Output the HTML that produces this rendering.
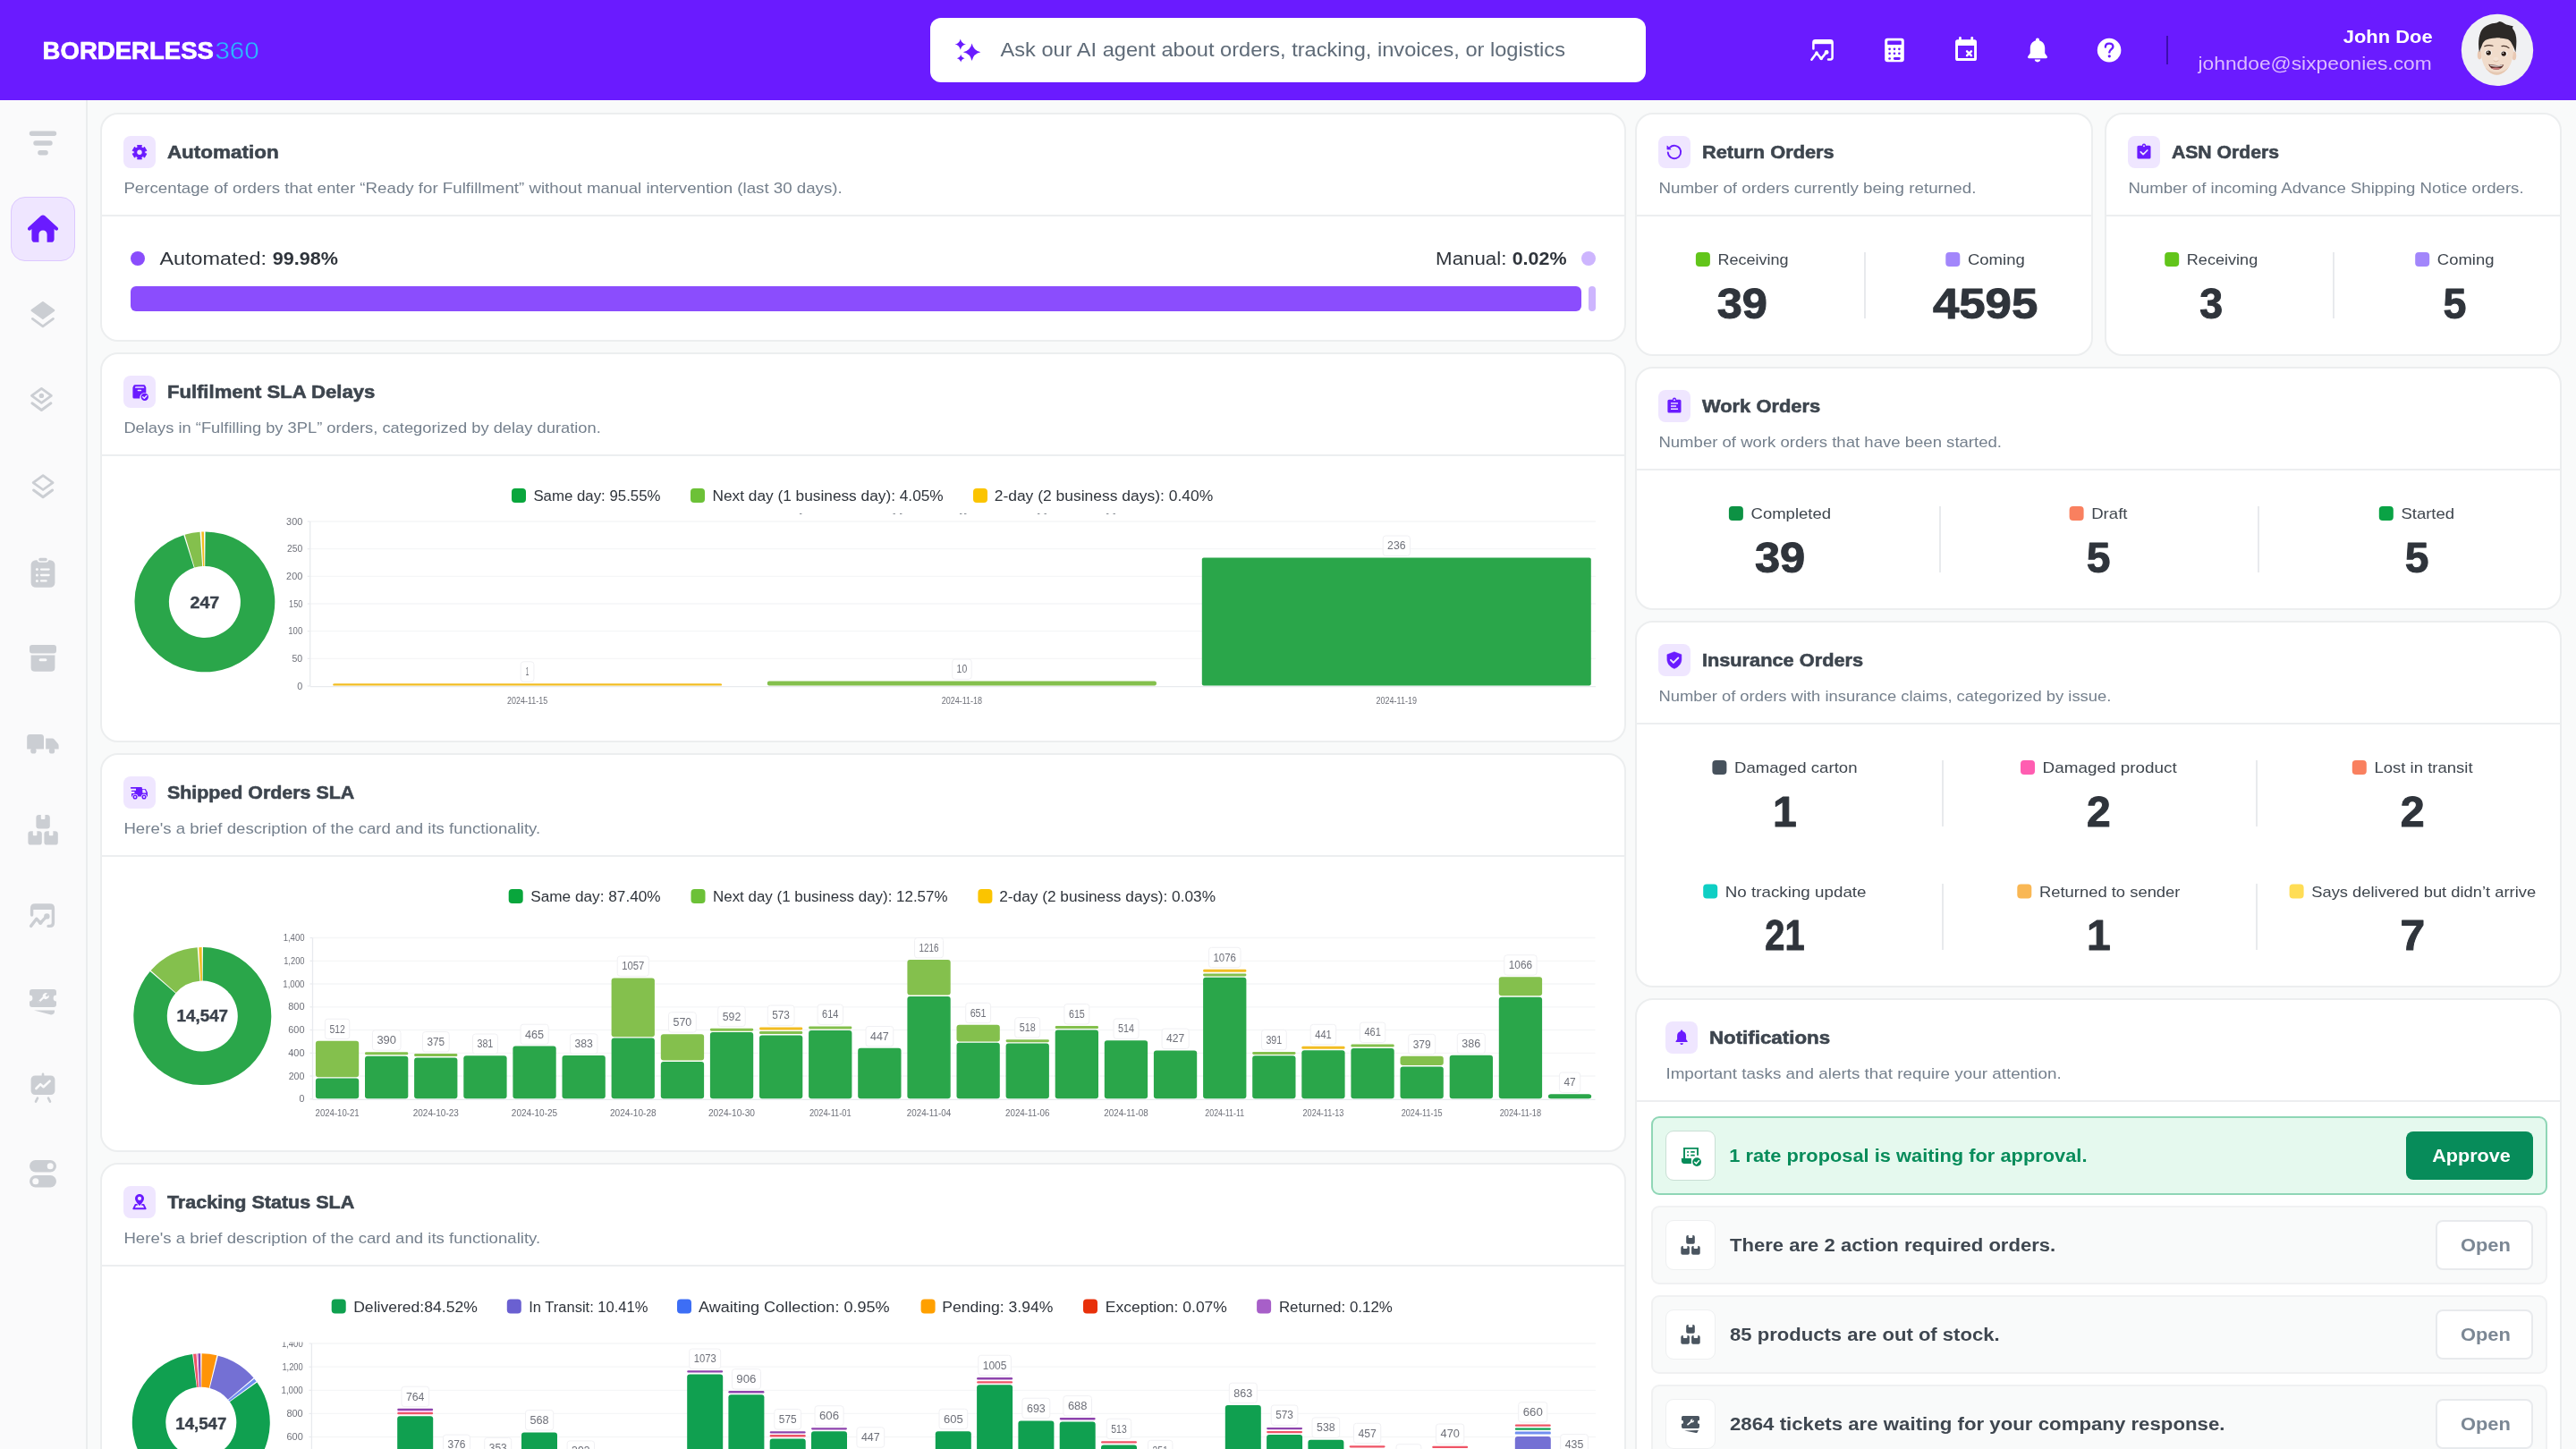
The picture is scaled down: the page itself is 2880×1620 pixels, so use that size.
<!DOCTYPE html>
<html lang="en"><head><meta charset="utf-8"><title>Borderless360 Dashboard</title>
<style>
:root{--u:calc(100vw / 2880);}
html,body{margin:0;padding:0;}
body{width:100vw;height:calc(1620*var(--u));overflow:hidden;background:#f9fafa;position:relative;font-family:"Liberation Sans",sans-serif;}
.b{position:absolute;box-sizing:content-box;}
.card{background:#fff;border:calc(2*var(--u)) solid #eceeef;border-radius:calc(20*var(--u));box-sizing:border-box;}
svg.ov{position:absolute;left:0;top:0;width:100vw;height:calc(1620*var(--u));will-change:transform;}
svg text{font-family:"Liberation Sans",sans-serif;}
</style></head>
<body>
<div class="b" style="left:calc(0*var(--u));top:calc(0*var(--u));width:calc(2880*var(--u));height:calc(112*var(--u));background:#6a1bff;"></div>
<div class="b" style="left:calc(1040*var(--u));top:calc(20*var(--u));width:calc(800*var(--u));height:calc(72*var(--u));background:#fff;border-radius:calc(12*var(--u));"></div>
<div class="b" style="left:calc(2422*var(--u));top:calc(40*var(--u));width:calc(2*var(--u));height:calc(32*var(--u));background:#3d0eae;"></div>
<div class="b" style="left:calc(0*var(--u));top:calc(112*var(--u));width:calc(96*var(--u));height:calc(1508*var(--u));background:#fafafb;border-right:calc(2*var(--u)) solid #ebedee;"></div>
<div class="b" style="left:calc(12*var(--u));top:calc(220*var(--u));width:calc(72*var(--u));height:calc(72*var(--u));background:#efe6ff;border:calc(1*var(--u)) solid #dcc8ff;border-radius:calc(16*var(--u));box-sizing:border-box;"></div>
<div class="b card" style="left:calc(112*var(--u));top:calc(126*var(--u));width:calc(1706*var(--u));height:calc(256*var(--u));"></div>
<div class="b" style="left:calc(114*var(--u));top:calc(240*var(--u));width:calc(1702*var(--u));height:calc(2*var(--u));background:#eceef0;"></div>
<div class="b" style="left:calc(138*var(--u));top:calc(152*var(--u));width:calc(36*var(--u));height:calc(36*var(--u));background:#efe6ff;border-radius:calc(8*var(--u));"></div>
<div class="b card" style="left:calc(112*var(--u));top:calc(394*var(--u));width:calc(1706*var(--u));height:calc(436*var(--u));"></div>
<div class="b" style="left:calc(114*var(--u));top:calc(508*var(--u));width:calc(1702*var(--u));height:calc(2*var(--u));background:#eceef0;"></div>
<div class="b" style="left:calc(138*var(--u));top:calc(420*var(--u));width:calc(36*var(--u));height:calc(36*var(--u));background:#efe6ff;border-radius:calc(8*var(--u));"></div>
<div class="b card" style="left:calc(112*var(--u));top:calc(842*var(--u));width:calc(1706*var(--u));height:calc(446*var(--u));"></div>
<div class="b" style="left:calc(114*var(--u));top:calc(956*var(--u));width:calc(1702*var(--u));height:calc(2*var(--u));background:#eceef0;"></div>
<div class="b" style="left:calc(138*var(--u));top:calc(868*var(--u));width:calc(36*var(--u));height:calc(36*var(--u));background:#efe6ff;border-radius:calc(8*var(--u));"></div>
<div class="b card" style="left:calc(112*var(--u));top:calc(1300*var(--u));width:calc(1706*var(--u));height:calc(400*var(--u));"></div>
<div class="b" style="left:calc(114*var(--u));top:calc(1414*var(--u));width:calc(1702*var(--u));height:calc(2*var(--u));background:#eceef0;"></div>
<div class="b" style="left:calc(138*var(--u));top:calc(1326*var(--u));width:calc(36*var(--u));height:calc(36*var(--u));background:#efe6ff;border-radius:calc(8*var(--u));"></div>
<div class="b card" style="left:calc(1828*var(--u));top:calc(126*var(--u));width:calc(512*var(--u));height:calc(272*var(--u));"></div>
<div class="b" style="left:calc(1830*var(--u));top:calc(240*var(--u));width:calc(508*var(--u));height:calc(2*var(--u));background:#eceef0;"></div>
<div class="b" style="left:calc(1854*var(--u));top:calc(152*var(--u));width:calc(36*var(--u));height:calc(36*var(--u));background:#efe6ff;border-radius:calc(8*var(--u));"></div>
<div class="b card" style="left:calc(2353*var(--u));top:calc(126*var(--u));width:calc(511*var(--u));height:calc(272*var(--u));"></div>
<div class="b" style="left:calc(2355*var(--u));top:calc(240*var(--u));width:calc(507*var(--u));height:calc(2*var(--u));background:#eceef0;"></div>
<div class="b" style="left:calc(2379*var(--u));top:calc(152*var(--u));width:calc(36*var(--u));height:calc(36*var(--u));background:#efe6ff;border-radius:calc(8*var(--u));"></div>
<div class="b card" style="left:calc(1828*var(--u));top:calc(410*var(--u));width:calc(1036*var(--u));height:calc(272*var(--u));"></div>
<div class="b" style="left:calc(1830*var(--u));top:calc(524*var(--u));width:calc(1032*var(--u));height:calc(2*var(--u));background:#eceef0;"></div>
<div class="b" style="left:calc(1854*var(--u));top:calc(436*var(--u));width:calc(36*var(--u));height:calc(36*var(--u));background:#efe6ff;border-radius:calc(8*var(--u));"></div>
<div class="b card" style="left:calc(1828*var(--u));top:calc(694*var(--u));width:calc(1036*var(--u));height:calc(410*var(--u));"></div>
<div class="b" style="left:calc(1830*var(--u));top:calc(808*var(--u));width:calc(1032*var(--u));height:calc(2*var(--u));background:#eceef0;"></div>
<div class="b" style="left:calc(1854*var(--u));top:calc(720*var(--u));width:calc(36*var(--u));height:calc(36*var(--u));background:#efe6ff;border-radius:calc(8*var(--u));"></div>
<div class="b card" style="left:calc(1828*var(--u));top:calc(1116*var(--u));width:calc(1036*var(--u));height:calc(600*var(--u));"></div>
<div class="b" style="left:calc(1830*var(--u));top:calc(1230*var(--u));width:calc(1032*var(--u));height:calc(2*var(--u));background:#eceef0;"></div>
<div class="b" style="left:calc(1862*var(--u));top:calc(1142*var(--u));width:calc(36*var(--u));height:calc(36*var(--u));background:#efe6ff;border-radius:calc(8*var(--u));"></div>
<div class="b" style="left:calc(2083.6*var(--u));top:calc(282*var(--u));width:calc(2*var(--u));height:calc(74*var(--u));background:#e8eaed;"></div>
<div class="b" style="left:calc(2607.6*var(--u));top:calc(282*var(--u));width:calc(2*var(--u));height:calc(74*var(--u));background:#e8eaed;"></div>
<div class="b" style="left:calc(2167.7*var(--u));top:calc(566*var(--u));width:calc(2*var(--u));height:calc(74*var(--u));background:#e8eaed;"></div>
<div class="b" style="left:calc(2523.7*var(--u));top:calc(566*var(--u));width:calc(2*var(--u));height:calc(74*var(--u));background:#e8eaed;"></div>
<div class="b" style="left:calc(2170.5*var(--u));top:calc(850*var(--u));width:calc(2*var(--u));height:calc(74*var(--u));background:#e8eaed;"></div>
<div class="b" style="left:calc(2521.5*var(--u));top:calc(850*var(--u));width:calc(2*var(--u));height:calc(74*var(--u));background:#e8eaed;"></div>
<div class="b" style="left:calc(2170.5*var(--u));top:calc(988.4*var(--u));width:calc(2*var(--u));height:calc(74*var(--u));background:#e8eaed;"></div>
<div class="b" style="left:calc(2521.5*var(--u));top:calc(988.4*var(--u));width:calc(2*var(--u));height:calc(74*var(--u));background:#e8eaed;"></div>
<div class="b" style="left:calc(1846*var(--u));top:calc(1248*var(--u));width:calc(1002*var(--u));height:calc(88*var(--u));background:#e5f9ee;border:calc(2*var(--u)) solid #8fd6b6;border-radius:calc(9*var(--u));box-sizing:border-box;"></div>
<div class="b" style="left:calc(1862.2*var(--u));top:calc(1264.2*var(--u));width:calc(55.6*var(--u));height:calc(55.6*var(--u));background:#fff;border:calc(1.5*var(--u)) solid #c9dfd4;border-radius:calc(9*var(--u));box-sizing:border-box;"></div>
<div class="b" style="left:calc(2690*var(--u));top:calc(1265*var(--u));width:calc(142*var(--u));height:calc(54*var(--u));background:#078c5a;border-radius:calc(8*var(--u));"></div>
<div class="b" style="left:calc(1846*var(--u));top:calc(1348*var(--u));width:calc(1002*var(--u));height:calc(88*var(--u));background:#f9fafa;border:calc(2*var(--u)) solid #f0f1f2;border-radius:calc(9*var(--u));box-sizing:border-box;"></div>
<div class="b" style="left:calc(1862.2*var(--u));top:calc(1364.2*var(--u));width:calc(55.6*var(--u));height:calc(55.6*var(--u));background:#fff;border:calc(1.5*var(--u)) solid #eef0f1;border-radius:calc(9*var(--u));box-sizing:border-box;"></div>
<div class="b" style="left:calc(2722.6*var(--u));top:calc(1364*var(--u));width:calc(109.6*var(--u));height:calc(56*var(--u));background:#fff;border:calc(2*var(--u)) solid #e8eaed;border-radius:calc(8*var(--u));box-sizing:border-box;"></div>
<div class="b" style="left:calc(1846*var(--u));top:calc(1448*var(--u));width:calc(1002*var(--u));height:calc(88*var(--u));background:#f9fafa;border:calc(2*var(--u)) solid #f0f1f2;border-radius:calc(9*var(--u));box-sizing:border-box;"></div>
<div class="b" style="left:calc(1862.2*var(--u));top:calc(1464.2*var(--u));width:calc(55.6*var(--u));height:calc(55.6*var(--u));background:#fff;border:calc(1.5*var(--u)) solid #eef0f1;border-radius:calc(9*var(--u));box-sizing:border-box;"></div>
<div class="b" style="left:calc(2722.6*var(--u));top:calc(1464*var(--u));width:calc(109.6*var(--u));height:calc(56*var(--u));background:#fff;border:calc(2*var(--u)) solid #e8eaed;border-radius:calc(8*var(--u));box-sizing:border-box;"></div>
<div class="b" style="left:calc(1846*var(--u));top:calc(1548*var(--u));width:calc(1002*var(--u));height:calc(88*var(--u));background:#f9fafa;border:calc(2*var(--u)) solid #f0f1f2;border-radius:calc(9*var(--u));box-sizing:border-box;"></div>
<div class="b" style="left:calc(1862.2*var(--u));top:calc(1564.2*var(--u));width:calc(55.6*var(--u));height:calc(55.6*var(--u));background:#fff;border:calc(1.5*var(--u)) solid #eef0f1;border-radius:calc(9*var(--u));box-sizing:border-box;"></div>
<div class="b" style="left:calc(2722.6*var(--u));top:calc(1564*var(--u));width:calc(109.6*var(--u));height:calc(56*var(--u));background:#fff;border:calc(2*var(--u)) solid #e8eaed;border-radius:calc(8*var(--u));box-sizing:border-box;"></div>
<svg class="ov" viewBox="0 0 2880 1620" preserveAspectRatio="xMinYMin meet">
<text x="47.6" y="65.6" font-size="27.2" fill="#ffffff" font-weight="700" textLength="191.3" lengthAdjust="spacingAndGlyphs" stroke="#fff" stroke-width="0.7" stroke-linejoin="round">BORDERLESS</text>
<text x="240.4" y="65.8" font-size="28" fill="#2bb8ff" textLength="49.3" lengthAdjust="spacingAndGlyphs" stroke="#6a1bff" stroke-width="0.4">360</text>
<text x="1118.5" y="63.4" font-size="22" fill="#5f6b78" textLength="631.5" lengthAdjust="spacingAndGlyphs">Ask our AI agent about orders, tracking, invoices, or logistics</text>
<text x="2719.6" y="47.8" font-size="20" fill="#ffffff" font-weight="700" text-anchor="end" textLength="99.8" lengthAdjust="spacingAndGlyphs">John Doe</text>
<text x="2718.7" y="77.7" font-size="20" fill="#dcbcff" text-anchor="end" textLength="261.2" lengthAdjust="spacingAndGlyphs">johndoe@sixpeonies.com</text>
<text x="186.9" y="177.0" font-size="20" fill="#3d454e" font-weight="700" textLength="124.7" lengthAdjust="spacingAndGlyphs" stroke="#3d454e" stroke-width="0.55">Automation</text>
<text x="138.4" y="216.3" font-size="17" fill="#75808d" textLength="803.3" lengthAdjust="spacingAndGlyphs">Percentage of orders that enter “Ready for Fulfillment” without manual intervention (last 30 days).</text>
<text x="186.9" y="445.0" font-size="20" fill="#3d454e" font-weight="700" textLength="232.4" lengthAdjust="spacingAndGlyphs" stroke="#3d454e" stroke-width="0.55">Fulfilment SLA Delays</text>
<text x="138.4" y="484.3" font-size="17" fill="#75808d" textLength="533.4" lengthAdjust="spacingAndGlyphs">Delays in “Fulfilling by 3PL” orders, categorized by delay duration.</text>
<text x="186.9" y="893.0" font-size="20" fill="#3d454e" font-weight="700" textLength="209.4" lengthAdjust="spacingAndGlyphs" stroke="#3d454e" stroke-width="0.55">Shipped Orders SLA</text>
<text x="138.4" y="932.3" font-size="17" fill="#75808d" textLength="465.8" lengthAdjust="spacingAndGlyphs">Here&#x27;s a brief description of the card and its functionality.</text>
<text x="186.9" y="1351.0" font-size="20" fill="#3d454e" font-weight="700" textLength="209.4" lengthAdjust="spacingAndGlyphs" stroke="#3d454e" stroke-width="0.55">Tracking Status SLA</text>
<text x="138.4" y="1390.3" font-size="17" fill="#75808d" textLength="465.8" lengthAdjust="spacingAndGlyphs">Here&#x27;s a brief description of the card and its functionality.</text>
<text x="1902.9" y="177.0" font-size="20" fill="#3d454e" font-weight="700" textLength="147.8" lengthAdjust="spacingAndGlyphs" stroke="#3d454e" stroke-width="0.55">Return Orders</text>
<text x="1854.4" y="216.3" font-size="17" fill="#75808d" textLength="355.0" lengthAdjust="spacingAndGlyphs">Number of orders currently being returned.</text>
<text x="2427.9" y="177.0" font-size="20" fill="#3d454e" font-weight="700" textLength="120.2" lengthAdjust="spacingAndGlyphs" stroke="#3d454e" stroke-width="0.55">ASN Orders</text>
<text x="2379.4" y="216.3" font-size="17" fill="#75808d" textLength="442.2" lengthAdjust="spacingAndGlyphs">Number of incoming Advance Shipping Notice orders.</text>
<text x="1902.9" y="461.0" font-size="20" fill="#3d454e" font-weight="700" textLength="132.4" lengthAdjust="spacingAndGlyphs" stroke="#3d454e" stroke-width="0.55">Work Orders</text>
<text x="1854.4" y="500.3" font-size="17" fill="#75808d" textLength="383.6" lengthAdjust="spacingAndGlyphs">Number of work orders that have been started.</text>
<text x="1902.9" y="745.0" font-size="20" fill="#3d454e" font-weight="700" textLength="180.2" lengthAdjust="spacingAndGlyphs" stroke="#3d454e" stroke-width="0.55">Insurance Orders</text>
<text x="1854.4" y="784.3" font-size="17" fill="#75808d" textLength="506.0" lengthAdjust="spacingAndGlyphs">Number of orders with insurance claims, categorized by issue.</text>
<text x="1910.9" y="1167.0" font-size="20" fill="#3d454e" font-weight="700" textLength="135.2" lengthAdjust="spacingAndGlyphs" stroke="#3d454e" stroke-width="0.55">Notifications</text>
<text x="1862.4" y="1206.3" font-size="17" fill="#75808d" textLength="442.4" lengthAdjust="spacingAndGlyphs">Important tasks and alerts that require your attention.</text>
<circle cx="154" cy="289" r="8" fill="#8a4dfc"/>
<text x="178.4" y="295.7" font-size="20" fill="#2f343b" textLength="119.7" lengthAdjust="spacingAndGlyphs">Automated:</text>
<text x="304.8" y="295.7" font-size="20" fill="#2f343b" font-weight="700" textLength="73.3" lengthAdjust="spacingAndGlyphs">99.98%</text>
<text x="1605.1" y="295.7" font-size="20" fill="#2f343b" textLength="79.3" lengthAdjust="spacingAndGlyphs">Manual:</text>
<text x="1690.7" y="295.7" font-size="20" fill="#2f343b" font-weight="700" textLength="60.8" lengthAdjust="spacingAndGlyphs">0.02%</text>
<circle cx="1776" cy="289" r="8" fill="#cdb5fe"/>
<rect x="146.0" y="320.0" width="1622.0" height="28.0" rx="6" fill="#8b4dfd"/>
<rect x="1776.0" y="320.0" width="8.0" height="28.0" rx="4" fill="#cdb5fe"/>
<rect x="1895.9" y="282.0" width="16.0" height="16.0" rx="4" fill="#62c51a"/>
<text x="1920.5" y="296.3" font-size="17" fill="#3f464e" textLength="79.1" lengthAdjust="spacingAndGlyphs">Receiving</text>
<text x="1947.8" y="355.8" font-size="48" fill="#2f343b" font-weight="700" text-anchor="middle" textLength="56.3" lengthAdjust="spacingAndGlyphs" stroke="#2f343b" stroke-width="1" stroke-linejoin="round">39</text>
<rect x="2175.3" y="282.0" width="16.0" height="16.0" rx="4" fill="#a286fb"/>
<text x="2199.9" y="296.3" font-size="17" fill="#3f464e" textLength="63.9" lengthAdjust="spacingAndGlyphs">Coming</text>
<text x="2219.6" y="355.8" font-size="48" fill="#2f343b" font-weight="700" text-anchor="middle" textLength="117.4" lengthAdjust="spacingAndGlyphs" stroke="#2f343b" stroke-width="1" stroke-linejoin="round">4595</text>
<rect x="2420.2" y="282.0" width="16.0" height="16.0" rx="4" fill="#62c51a"/>
<text x="2444.8" y="296.3" font-size="17" fill="#3f464e" textLength="79.4" lengthAdjust="spacingAndGlyphs">Receiving</text>
<text x="2472.2" y="355.8" font-size="48" fill="#2f343b" font-weight="700" text-anchor="middle" textLength="25.9" lengthAdjust="spacingAndGlyphs" stroke="#2f343b" stroke-width="1" stroke-linejoin="round">3</text>
<rect x="2700.2" y="282.0" width="16.0" height="16.0" rx="4" fill="#a286fb"/>
<text x="2724.8" y="296.3" font-size="17" fill="#3f464e" textLength="63.7" lengthAdjust="spacingAndGlyphs">Coming</text>
<text x="2744.4" y="355.8" font-size="48" fill="#2f343b" font-weight="700" text-anchor="middle" textLength="25.9" lengthAdjust="spacingAndGlyphs" stroke="#2f343b" stroke-width="1" stroke-linejoin="round">5</text>
<rect x="1932.9" y="566.0" width="16.0" height="16.0" rx="4" fill="#0d9244"/>
<text x="1957.5" y="580.3" font-size="17" fill="#3f464e" textLength="89.6" lengthAdjust="spacingAndGlyphs">Completed</text>
<text x="1990.1" y="639.8" font-size="48" fill="#2f343b" font-weight="700" text-anchor="middle" textLength="56.3" lengthAdjust="spacingAndGlyphs" stroke="#2f343b" stroke-width="1" stroke-linejoin="round">39</text>
<rect x="2313.6" y="566.0" width="16.0" height="16.0" rx="4" fill="#f9805f"/>
<text x="2338.2" y="580.3" font-size="17" fill="#3f464e" textLength="40.3" lengthAdjust="spacingAndGlyphs">Draft</text>
<text x="2346.0" y="639.8" font-size="48" fill="#2f343b" font-weight="700" text-anchor="middle" textLength="26.7" lengthAdjust="spacingAndGlyphs" stroke="#2f343b" stroke-width="1" stroke-linejoin="round">5</text>
<rect x="2659.8" y="566.0" width="16.0" height="16.0" rx="4" fill="#0aa345"/>
<text x="2684.4" y="580.3" font-size="17" fill="#3f464e" textLength="59.7" lengthAdjust="spacingAndGlyphs">Started</text>
<text x="2702.0" y="639.8" font-size="48" fill="#2f343b" font-weight="700" text-anchor="middle" textLength="26.7" lengthAdjust="spacingAndGlyphs" stroke="#2f343b" stroke-width="1" stroke-linejoin="round">5</text>
<rect x="1914.4" y="850.0" width="16.0" height="16.0" rx="4" fill="#46515c"/>
<text x="1939.0" y="864.3" font-size="17" fill="#3f464e" textLength="137.5" lengthAdjust="spacingAndGlyphs">Damaged carton</text>
<text x="1995.4" y="923.8" font-size="48" fill="#2f343b" font-weight="700" text-anchor="middle" textLength="26.7" lengthAdjust="spacingAndGlyphs" stroke="#2f343b" stroke-width="1" stroke-linejoin="round">1</text>
<rect x="2259.0" y="850.0" width="16.0" height="16.0" rx="4" fill="#ff5db1"/>
<text x="2283.6" y="864.3" font-size="17" fill="#3f464e" textLength="150.2" lengthAdjust="spacingAndGlyphs">Damaged product</text>
<text x="2346.4" y="923.8" font-size="48" fill="#2f343b" font-weight="700" text-anchor="middle" textLength="26.7" lengthAdjust="spacingAndGlyphs" stroke="#2f343b" stroke-width="1" stroke-linejoin="round">2</text>
<rect x="2629.8" y="850.0" width="16.0" height="16.0" rx="4" fill="#f9805f"/>
<text x="2654.4" y="864.3" font-size="17" fill="#3f464e" textLength="110.2" lengthAdjust="spacingAndGlyphs">Lost in transit</text>
<text x="2697.2" y="923.8" font-size="48" fill="#2f343b" font-weight="700" text-anchor="middle" textLength="26.9" lengthAdjust="spacingAndGlyphs" stroke="#2f343b" stroke-width="1" stroke-linejoin="round">2</text>
<rect x="1904.2" y="988.4" width="16.0" height="16.0" rx="4" fill="#0fcfc4"/>
<text x="1928.8" y="1002.7" font-size="17" fill="#3f464e" textLength="157.7" lengthAdjust="spacingAndGlyphs">No tracking update</text>
<text x="1995.4" y="1062.2" font-size="48" fill="#2f343b" font-weight="700" text-anchor="middle" textLength="44.3" lengthAdjust="spacingAndGlyphs" stroke="#2f343b" stroke-width="1" stroke-linejoin="round">21</text>
<rect x="2255.3" y="988.4" width="16.0" height="16.0" rx="4" fill="#f9b754"/>
<text x="2279.9" y="1002.7" font-size="17" fill="#3f464e" textLength="157.6" lengthAdjust="spacingAndGlyphs">Returned to sender</text>
<text x="2346.4" y="1062.2" font-size="48" fill="#2f343b" font-weight="700" text-anchor="middle" textLength="26.7" lengthAdjust="spacingAndGlyphs" stroke="#2f343b" stroke-width="1" stroke-linejoin="round">1</text>
<rect x="2559.6" y="988.4" width="16.0" height="16.0" rx="4" fill="#ffdd55"/>
<text x="2584.2" y="1002.7" font-size="17" fill="#3f464e" textLength="251.0" lengthAdjust="spacingAndGlyphs">Says delivered but didn’t arrive</text>
<text x="2697.4" y="1062.2" font-size="48" fill="#2f343b" font-weight="700" text-anchor="middle" textLength="27.7" lengthAdjust="spacingAndGlyphs" stroke="#2f343b" stroke-width="1" stroke-linejoin="round">7</text>
<text x="1933.2" y="1298.7" font-size="20" fill="#078c5a" font-weight="700" textLength="400.3" lengthAdjust="spacingAndGlyphs">1 rate proposal is waiting for approval.</text>
<text x="2719.2" y="1298.9" font-size="20" fill="#ffffff" font-weight="700" textLength="87.6" lengthAdjust="spacingAndGlyphs">Approve</text>
<text x="1934.0" y="1398.7" font-size="20" fill="#3f4750" font-weight="700" textLength="364.2" lengthAdjust="spacingAndGlyphs">There are 2 action required orders.</text>
<text x="2750.9" y="1398.9" font-size="20" fill="#7b8794" font-weight="700" textLength="55.9" lengthAdjust="spacingAndGlyphs">Open</text>
<text x="1934.0" y="1498.7" font-size="20" fill="#3f4750" font-weight="700" textLength="301.6" lengthAdjust="spacingAndGlyphs">85 products are out of stock.</text>
<text x="2750.9" y="1498.9" font-size="20" fill="#7b8794" font-weight="700" textLength="55.9" lengthAdjust="spacingAndGlyphs">Open</text>
<text x="1934.0" y="1598.7" font-size="20" fill="#3f4750" font-weight="700" textLength="553.5" lengthAdjust="spacingAndGlyphs">2864 tickets are waiting for your company response.</text>
<text x="2750.9" y="1598.9" font-size="20" fill="#7b8794" font-weight="700" textLength="55.9" lengthAdjust="spacingAndGlyphs">Open</text>
<rect x="572.0" y="546.0" width="16.0" height="16.0" rx="4" fill="#09a63c"/>
<text x="596.4" y="560.1" font-size="16" fill="#2f343b" textLength="142.1" lengthAdjust="spacingAndGlyphs">Same day: 95.55%</text>
<rect x="772.0" y="546.0" width="16.0" height="16.0" rx="4" fill="#6cc137"/>
<text x="796.5" y="560.1" font-size="16" fill="#2f343b" textLength="258.2" lengthAdjust="spacingAndGlyphs">Next day (1 business day): 4.05%</text>
<rect x="1088.0" y="546.0" width="16.0" height="16.0" rx="4" fill="#fbc400"/>
<text x="1111.7" y="560.1" font-size="16" fill="#2f343b" textLength="244.5" lengthAdjust="spacingAndGlyphs">2-day (2 business days): 0.40%</text>
<g><path d="M229.58 594.50A78.4 78.4 0 1 1 205.32 598.13L216.87 634.75A40 40 0 1 0 229.25 632.90Z" fill="#2aa64a"/><path d="M206.63 597.73A78.4 78.4 0 0 1 223.57 594.68L226.18 632.99A40 40 0 0 0 217.54 634.55Z" fill="#84c04d"/><path d="M225.21 594.59A78.4 78.4 0 0 1 227.94 594.51L228.41 632.90A40 40 0 0 0 227.02 632.94Z" fill="#f2bd22"/></g>
<text x="228.9" y="680.0" font-size="18" fill="#3b424c" font-weight="700" text-anchor="middle" textLength="32.8" lengthAdjust="spacingAndGlyphs" stroke="#3b424c" stroke-width="0.4">247</text>
<path d="M343.7 767.0H346.7" stroke="#e8eaee" stroke-width="1.2"/>
<text x="338.2" y="770.6" font-size="10" fill="#6e7079" text-anchor="end" textLength="6.0" lengthAdjust="spacingAndGlyphs">0</text>
<path d="M346.7 736.3H1784" stroke="#f5f6f7" stroke-width="1.3"/>
<path d="M343.7 736.3H346.7" stroke="#e8eaee" stroke-width="1.2"/>
<text x="338.2" y="739.9" font-size="10" fill="#6e7079" text-anchor="end" textLength="11.7" lengthAdjust="spacingAndGlyphs">50</text>
<path d="M346.7 705.7H1784" stroke="#f5f6f7" stroke-width="1.3"/>
<path d="M343.7 705.7H346.7" stroke="#e8eaee" stroke-width="1.2"/>
<text x="338.2" y="709.3" font-size="10" fill="#6e7079" text-anchor="end" textLength="15.9" lengthAdjust="spacingAndGlyphs">100</text>
<path d="M346.7 675.0H1784" stroke="#f5f6f7" stroke-width="1.3"/>
<path d="M343.7 675.0H346.7" stroke="#e8eaee" stroke-width="1.2"/>
<text x="338.2" y="678.6" font-size="10" fill="#6e7079" text-anchor="end" textLength="15.1" lengthAdjust="spacingAndGlyphs">150</text>
<path d="M346.7 644.3H1784" stroke="#f5f6f7" stroke-width="1.3"/>
<path d="M343.7 644.3H346.7" stroke="#e8eaee" stroke-width="1.2"/>
<text x="338.2" y="647.9" font-size="10" fill="#6e7079" text-anchor="end" textLength="18.1" lengthAdjust="spacingAndGlyphs">200</text>
<path d="M346.7 613.7H1784" stroke="#f5f6f7" stroke-width="1.3"/>
<path d="M343.7 613.7H346.7" stroke="#e8eaee" stroke-width="1.2"/>
<text x="338.2" y="617.3" font-size="10" fill="#6e7079" text-anchor="end" textLength="17.2" lengthAdjust="spacingAndGlyphs">250</text>
<path d="M346.7 583.0H1784" stroke="#f5f6f7" stroke-width="1.3"/>
<path d="M343.7 583.0H346.7" stroke="#e8eaee" stroke-width="1.2"/>
<text x="338.2" y="586.6" font-size="10" fill="#6e7079" text-anchor="end" textLength="18.1" lengthAdjust="spacingAndGlyphs">300</text>
<path d="M346.7 583.0V767.0" stroke="#e8eaee" stroke-width="1.3"/>
<path d="M346.7 767.6H1784" stroke="#e8eaee" stroke-width="1.3"/>
<rect x="372.1" y="764.2" width="435.0" height="2.4" rx="2" fill="#f2bd22"/>
<g><rect x="582.2" y="739.8" width="14.7" height="22.4" rx="3" fill="#fff" stroke="#f0f0f3" stroke-width="1"/></g>
<text x="589.6" y="755.1" font-size="12.3" fill="#6e7079" text-anchor="middle" textLength="3.5" lengthAdjust="spacingAndGlyphs">1</text>
<text x="589.6" y="787.0" font-size="10" fill="#6e7079" text-anchor="middle" textLength="45.1" lengthAdjust="spacingAndGlyphs">2024-11-15</text>
<rect x="857.9" y="761.4" width="435.0" height="5.2" rx="2" fill="#84c04d"/>
<g><rect x="1064.7" y="737.0" width="21.5" height="22.4" rx="3" fill="#fff" stroke="#f0f0f3" stroke-width="1"/></g>
<text x="1075.4" y="752.3" font-size="12.3" fill="#6e7079" text-anchor="middle" textLength="11.6" lengthAdjust="spacingAndGlyphs">10</text>
<text x="1075.4" y="787.0" font-size="10" fill="#6e7079" text-anchor="middle" textLength="45.5" lengthAdjust="spacingAndGlyphs">2024-11-18</text>
<rect x="1343.8" y="623.4" width="435.0" height="143.2" rx="2" fill="#2aa64a"/>
<g><rect x="1546.2" y="599.0" width="30.2" height="22.4" rx="3" fill="#fff" stroke="#f0f0f3" stroke-width="1"/></g>
<text x="1561.3" y="614.3" font-size="12.3" fill="#6e7079" text-anchor="middle" textLength="20.4" lengthAdjust="spacingAndGlyphs">236</text>
<text x="1561.3" y="787.0" font-size="10" fill="#6e7079" text-anchor="middle" textLength="45.4" lengthAdjust="spacingAndGlyphs">2024-11-19</text>
<rect x="894.0" y="573.9" width="2.4" height="1.1" rx="0" fill="#8a8f96"/>
<rect x="998.5" y="573.9" width="2.4" height="1.1" rx="0" fill="#8a8f96"/>
<rect x="1006.0" y="573.9" width="2.4" height="1.1" rx="0" fill="#8a8f96"/>
<rect x="1073.0" y="573.9" width="2.4" height="1.1" rx="0" fill="#8a8f96"/>
<rect x="1078.0" y="573.9" width="2.4" height="1.1" rx="0" fill="#8a8f96"/>
<rect x="1160.0" y="573.9" width="2.4" height="1.1" rx="0" fill="#8a8f96"/>
<rect x="1167.5" y="573.9" width="2.4" height="1.1" rx="0" fill="#8a8f96"/>
<rect x="1237.0" y="573.9" width="2.4" height="1.1" rx="0" fill="#8a8f96"/>
<rect x="1244.5" y="573.9" width="2.4" height="1.1" rx="0" fill="#8a8f96"/>
<rect x="568.7" y="994.0" width="16.0" height="16.0" rx="4" fill="#09a63c"/>
<text x="593.2" y="1008.1" font-size="16" fill="#2f343b" textLength="145.5" lengthAdjust="spacingAndGlyphs">Same day: 87.40%</text>
<rect x="772.5" y="994.0" width="16.0" height="16.0" rx="4" fill="#6cc137"/>
<text x="797.0" y="1008.1" font-size="16" fill="#2f343b" textLength="262.5" lengthAdjust="spacingAndGlyphs">Next day (1 business day): 12.57%</text>
<rect x="1093.4" y="994.0" width="16.0" height="16.0" rx="4" fill="#fbc400"/>
<text x="1117.2" y="1008.1" font-size="16" fill="#2f343b" textLength="241.9" lengthAdjust="spacingAndGlyphs">2-day (2 business days): 0.03%</text>
<g><path d="M226.97 1059.10A77 77 0 1 1 167.75 1086.09L196.26 1110.45A39.5 39.5 0 1 0 226.64 1096.60Z" fill="#2aa64a"/><path d="M168.63 1085.08A77 77 0 0 1 220.66 1059.31L223.41 1096.71A39.5 39.5 0 0 0 196.72 1109.93Z" fill="#84c04d"/><path d="M222.27 1059.21A77 77 0 0 1 225.63 1059.10L225.96 1096.60A39.5 39.5 0 0 0 224.23 1096.65Z" fill="#f2bd22"/></g>
<text x="226.3" y="1142.4" font-size="18" fill="#3b424c" font-weight="700" text-anchor="middle" textLength="57.5" lengthAdjust="spacingAndGlyphs" stroke="#3b424c" stroke-width="0.4">14,547</text>
<path d="M346.5 1228.8H349.5" stroke="#e8eaee" stroke-width="1.2"/>
<text x="340.5" y="1232.4" font-size="10" fill="#6e7079" text-anchor="end" textLength="5.9" lengthAdjust="spacingAndGlyphs">0</text>
<path d="M349.5 1203.0H1783.5" stroke="#f5f6f7" stroke-width="1.3"/>
<path d="M346.5 1203.0H349.5" stroke="#e8eaee" stroke-width="1.2"/>
<text x="340.5" y="1206.6" font-size="10" fill="#6e7079" text-anchor="end" textLength="17.8" lengthAdjust="spacingAndGlyphs">200</text>
<path d="M349.5 1177.3H1783.5" stroke="#f5f6f7" stroke-width="1.3"/>
<path d="M346.5 1177.3H349.5" stroke="#e8eaee" stroke-width="1.2"/>
<text x="340.5" y="1180.9" font-size="10" fill="#6e7079" text-anchor="end" textLength="18.3" lengthAdjust="spacingAndGlyphs">400</text>
<path d="M349.5 1151.5H1783.5" stroke="#f5f6f7" stroke-width="1.3"/>
<path d="M346.5 1151.5H349.5" stroke="#e8eaee" stroke-width="1.2"/>
<text x="340.5" y="1155.1" font-size="10" fill="#6e7079" text-anchor="end" textLength="18.2" lengthAdjust="spacingAndGlyphs">600</text>
<path d="M349.5 1125.8H1783.5" stroke="#f5f6f7" stroke-width="1.3"/>
<path d="M346.5 1125.8H349.5" stroke="#e8eaee" stroke-width="1.2"/>
<text x="340.5" y="1129.4" font-size="10" fill="#6e7079" text-anchor="end" textLength="18.3" lengthAdjust="spacingAndGlyphs">800</text>
<path d="M349.5 1100.0H1783.5" stroke="#f5f6f7" stroke-width="1.3"/>
<path d="M346.5 1100.0H349.5" stroke="#e8eaee" stroke-width="1.2"/>
<text x="340.5" y="1103.6" font-size="10" fill="#6e7079" text-anchor="end" textLength="24.2" lengthAdjust="spacingAndGlyphs">1,000</text>
<path d="M349.5 1074.3H1783.5" stroke="#f5f6f7" stroke-width="1.3"/>
<path d="M346.5 1074.3H349.5" stroke="#e8eaee" stroke-width="1.2"/>
<text x="340.5" y="1077.9" font-size="10" fill="#6e7079" text-anchor="end" textLength="23.3" lengthAdjust="spacingAndGlyphs">1,200</text>
<path d="M349.5 1048.5H1783.5" stroke="#f5f6f7" stroke-width="1.3"/>
<path d="M346.5 1048.5H349.5" stroke="#e8eaee" stroke-width="1.2"/>
<text x="340.5" y="1052.1" font-size="10" fill="#6e7079" text-anchor="end" textLength="23.8" lengthAdjust="spacingAndGlyphs">1,400</text>
<path d="M349.5 1048.5V1228.8" stroke="#e8eaee" stroke-width="1.3"/>
<path d="M349.5 1229.3999999999999H1783.5" stroke="#e8eaee" stroke-width="1.3"/>
<rect x="352.9" y="1205.6" width="48.3" height="22.7" rx="3" fill="#2aa64a"/>
<rect x="352.9" y="1163.7" width="48.3" height="40.5" rx="3" fill="#84c04d"/>
<g><rect x="363.4" y="1139.2" width="27.4" height="22.4" rx="3" fill="#fff" stroke="#f0f0f3" stroke-width="1"/></g>
<text x="377.1" y="1154.5" font-size="12.3" fill="#6e7079" text-anchor="middle" textLength="17.4" lengthAdjust="spacingAndGlyphs">512</text>
<text x="377.1" y="1248.0" font-size="10" fill="#6e7079" text-anchor="middle" textLength="49.0" lengthAdjust="spacingAndGlyphs">2024-10-21</text>
<rect x="408.0" y="1180.7" width="48.3" height="47.6" rx="3" fill="#2aa64a"/>
<rect x="408.0" y="1176.3" width="48.3" height="3.0" rx="1.4" fill="#84c04d"/>
<g><rect x="416.4" y="1151.8" width="31.6" height="22.4" rx="3" fill="#fff" stroke="#f0f0f3" stroke-width="1"/></g>
<text x="432.2" y="1167.1" font-size="12.3" fill="#6e7079" text-anchor="middle" textLength="21.6" lengthAdjust="spacingAndGlyphs">390</text>
<rect x="463.1" y="1182.5" width="48.3" height="45.8" rx="3" fill="#2aa64a"/>
<rect x="463.1" y="1178.1" width="48.3" height="3.0" rx="1.4" fill="#84c04d"/>
<g><rect x="472.5" y="1153.6" width="29.7" height="22.4" rx="3" fill="#fff" stroke="#f0f0f3" stroke-width="1"/></g>
<text x="487.3" y="1168.9" font-size="12.3" fill="#6e7079" text-anchor="middle" textLength="19.7" lengthAdjust="spacingAndGlyphs">375</text>
<text x="487.3" y="1248.0" font-size="10" fill="#6e7079" text-anchor="middle" textLength="51.2" lengthAdjust="spacingAndGlyphs">2024-10-23</text>
<rect x="518.3" y="1180.3" width="48.3" height="48.0" rx="3" fill="#2aa64a"/>
<g><rect x="528.5" y="1156.0" width="27.9" height="22.4" rx="3" fill="#fff" stroke="#f0f0f3" stroke-width="1"/></g>
<text x="542.4" y="1171.3" font-size="12.3" fill="#6e7079" text-anchor="middle" textLength="17.9" lengthAdjust="spacingAndGlyphs">381</text>
<rect x="573.4" y="1169.5" width="48.3" height="58.8" rx="3" fill="#2aa64a"/>
<g><rect x="582.0" y="1145.2" width="31.2" height="22.4" rx="3" fill="#fff" stroke="#f0f0f3" stroke-width="1"/></g>
<text x="597.5" y="1160.5" font-size="12.3" fill="#6e7079" text-anchor="middle" textLength="21.1" lengthAdjust="spacingAndGlyphs">465</text>
<text x="597.5" y="1248.0" font-size="10" fill="#6e7079" text-anchor="middle" textLength="51.3" lengthAdjust="spacingAndGlyphs">2024-10-25</text>
<rect x="628.5" y="1180.1" width="48.3" height="48.2" rx="3" fill="#2aa64a"/>
<g><rect x="637.4" y="1155.8" width="30.5" height="22.4" rx="3" fill="#fff" stroke="#f0f0f3" stroke-width="1"/></g>
<text x="652.7" y="1171.1" font-size="12.3" fill="#6e7079" text-anchor="middle" textLength="20.5" lengthAdjust="spacingAndGlyphs">383</text>
<rect x="683.6" y="1160.6" width="48.3" height="67.7" rx="3" fill="#2aa64a"/>
<rect x="683.6" y="1093.5" width="48.3" height="65.8" rx="3" fill="#84c04d"/>
<g><rect x="690.2" y="1069.0" width="35.1" height="22.4" rx="3" fill="#fff" stroke="#f0f0f3" stroke-width="1"/></g>
<text x="707.8" y="1084.3" font-size="12.3" fill="#6e7079" text-anchor="middle" textLength="25.1" lengthAdjust="spacingAndGlyphs">1057</text>
<text x="707.8" y="1248.0" font-size="10" fill="#6e7079" text-anchor="middle" textLength="51.7" lengthAdjust="spacingAndGlyphs">2024-10-28</text>
<rect x="738.8" y="1187.0" width="48.3" height="41.3" rx="3" fill="#2aa64a"/>
<rect x="738.8" y="1156.2" width="48.3" height="29.4" rx="3" fill="#84c04d"/>
<g><rect x="747.5" y="1131.7" width="30.8" height="22.4" rx="3" fill="#fff" stroke="#f0f0f3" stroke-width="1"/></g>
<text x="762.9" y="1147.0" font-size="12.3" fill="#6e7079" text-anchor="middle" textLength="20.8" lengthAdjust="spacingAndGlyphs">570</text>
<rect x="793.9" y="1154.1" width="48.3" height="74.2" rx="3" fill="#2aa64a"/>
<rect x="793.9" y="1149.7" width="48.3" height="3.0" rx="1.4" fill="#84c04d"/>
<g><rect x="802.7" y="1125.2" width="30.5" height="22.4" rx="3" fill="#fff" stroke="#f0f0f3" stroke-width="1"/></g>
<text x="818.0" y="1140.5" font-size="12.3" fill="#6e7079" text-anchor="middle" textLength="20.5" lengthAdjust="spacingAndGlyphs">592</text>
<text x="818.0" y="1248.0" font-size="10" fill="#6e7079" text-anchor="middle" textLength="52.1" lengthAdjust="spacingAndGlyphs">2024-10-30</text>
<rect x="849.0" y="1157.5" width="48.3" height="70.8" rx="3" fill="#2aa64a"/>
<rect x="849.0" y="1153.1" width="48.3" height="3.0" rx="1.4" fill="#84c04d"/>
<rect x="849.0" y="1148.5" width="48.3" height="3.0" rx="1.4" fill="#f2bd22"/>
<g><rect x="858.3" y="1124.0" width="29.7" height="22.4" rx="3" fill="#fff" stroke="#f0f0f3" stroke-width="1"/></g>
<text x="873.1" y="1139.3" font-size="12.3" fill="#6e7079" text-anchor="middle" textLength="19.7" lengthAdjust="spacingAndGlyphs">573</text>
<rect x="904.1" y="1151.9" width="48.3" height="76.4" rx="3" fill="#2aa64a"/>
<rect x="904.1" y="1147.5" width="48.3" height="3.0" rx="1.4" fill="#84c04d"/>
<g><rect x="914.1" y="1123.0" width="28.4" height="22.4" rx="3" fill="#fff" stroke="#f0f0f3" stroke-width="1"/></g>
<text x="928.3" y="1138.3" font-size="12.3" fill="#6e7079" text-anchor="middle" textLength="18.4" lengthAdjust="spacingAndGlyphs">614</text>
<text x="928.3" y="1248.0" font-size="10" fill="#6e7079" text-anchor="middle" textLength="46.8" lengthAdjust="spacingAndGlyphs">2024-11-01</text>
<rect x="959.2" y="1171.8" width="48.3" height="56.5" rx="3" fill="#2aa64a"/>
<g><rect x="968.0" y="1147.5" width="30.8" height="22.4" rx="3" fill="#fff" stroke="#f0f0f3" stroke-width="1"/></g>
<text x="983.4" y="1162.8" font-size="12.3" fill="#6e7079" text-anchor="middle" textLength="20.8" lengthAdjust="spacingAndGlyphs">447</text>
<rect x="1014.4" y="1113.9" width="48.3" height="114.4" rx="3" fill="#2aa64a"/>
<rect x="1014.4" y="1073.0" width="48.3" height="39.5" rx="3" fill="#84c04d"/>
<g><rect x="1022.5" y="1048.5" width="32.0" height="22.4" rx="3" fill="#fff" stroke="#f0f0f3" stroke-width="1"/></g>
<text x="1038.5" y="1063.8" font-size="12.3" fill="#6e7079" text-anchor="middle" textLength="22.0" lengthAdjust="spacingAndGlyphs">1216</text>
<text x="1038.5" y="1248.0" font-size="10" fill="#6e7079" text-anchor="middle" textLength="49.5" lengthAdjust="spacingAndGlyphs">2024-11-04</text>
<rect x="1069.5" y="1165.8" width="48.3" height="62.5" rx="3" fill="#2aa64a"/>
<rect x="1069.5" y="1145.8" width="48.3" height="18.6" rx="3" fill="#84c04d"/>
<g><rect x="1079.7" y="1121.3" width="27.9" height="22.4" rx="3" fill="#fff" stroke="#f0f0f3" stroke-width="1"/></g>
<text x="1093.6" y="1136.6" font-size="12.3" fill="#6e7079" text-anchor="middle" textLength="17.9" lengthAdjust="spacingAndGlyphs">651</text>
<rect x="1124.6" y="1166.6" width="48.3" height="61.7" rx="3" fill="#2aa64a"/>
<rect x="1124.6" y="1162.2" width="48.3" height="3.0" rx="1.4" fill="#84c04d"/>
<g><rect x="1134.7" y="1137.7" width="28.0" height="22.4" rx="3" fill="#fff" stroke="#f0f0f3" stroke-width="1"/></g>
<text x="1148.7" y="1153.0" font-size="12.3" fill="#6e7079" text-anchor="middle" textLength="18.0" lengthAdjust="spacingAndGlyphs">518</text>
<text x="1148.7" y="1248.0" font-size="10" fill="#6e7079" text-anchor="middle" textLength="49.4" lengthAdjust="spacingAndGlyphs">2024-11-06</text>
<rect x="1179.7" y="1151.5" width="48.3" height="76.8" rx="3" fill="#2aa64a"/>
<rect x="1179.7" y="1147.1" width="48.3" height="3.0" rx="1.4" fill="#84c04d"/>
<g><rect x="1189.9" y="1122.6" width="27.9" height="22.4" rx="3" fill="#fff" stroke="#f0f0f3" stroke-width="1"/></g>
<text x="1203.9" y="1137.9" font-size="12.3" fill="#6e7079" text-anchor="middle" textLength="17.9" lengthAdjust="spacingAndGlyphs">615</text>
<rect x="1234.8" y="1163.2" width="48.3" height="65.1" rx="3" fill="#2aa64a"/>
<g><rect x="1245.0" y="1138.9" width="28.0" height="22.4" rx="3" fill="#fff" stroke="#f0f0f3" stroke-width="1"/></g>
<text x="1259.0" y="1154.2" font-size="12.3" fill="#6e7079" text-anchor="middle" textLength="18.0" lengthAdjust="spacingAndGlyphs">514</text>
<text x="1259.0" y="1248.0" font-size="10" fill="#6e7079" text-anchor="middle" textLength="49.5" lengthAdjust="spacingAndGlyphs">2024-11-08</text>
<rect x="1289.9" y="1174.4" width="48.3" height="53.9" rx="3" fill="#2aa64a"/>
<g><rect x="1299.0" y="1150.1" width="30.2" height="22.4" rx="3" fill="#fff" stroke="#f0f0f3" stroke-width="1"/></g>
<text x="1314.1" y="1165.4" font-size="12.3" fill="#6e7079" text-anchor="middle" textLength="20.2" lengthAdjust="spacingAndGlyphs">427</text>
<rect x="1345.1" y="1092.8" width="48.3" height="135.5" rx="3" fill="#2aa64a"/>
<rect x="1345.1" y="1088.4" width="48.3" height="3.0" rx="1.4" fill="#84c04d"/>
<rect x="1345.1" y="1083.8" width="48.3" height="3.0" rx="1.4" fill="#f2bd22"/>
<g><rect x="1351.5" y="1059.3" width="35.5" height="22.4" rx="3" fill="#fff" stroke="#f0f0f3" stroke-width="1"/></g>
<text x="1369.2" y="1074.6" font-size="12.3" fill="#6e7079" text-anchor="middle" textLength="25.5" lengthAdjust="spacingAndGlyphs">1076</text>
<text x="1369.2" y="1248.0" font-size="10" fill="#6e7079" text-anchor="middle" textLength="43.7" lengthAdjust="spacingAndGlyphs">2024-11-11</text>
<rect x="1400.2" y="1180.3" width="48.3" height="48.0" rx="3" fill="#2aa64a"/>
<rect x="1400.2" y="1175.9" width="48.3" height="3.0" rx="1.4" fill="#84c04d"/>
<g><rect x="1410.5" y="1151.4" width="27.8" height="22.4" rx="3" fill="#fff" stroke="#f0f0f3" stroke-width="1"/></g>
<text x="1424.3" y="1166.7" font-size="12.3" fill="#6e7079" text-anchor="middle" textLength="17.8" lengthAdjust="spacingAndGlyphs">391</text>
<rect x="1455.3" y="1174.2" width="48.3" height="54.1" rx="3" fill="#2aa64a"/>
<rect x="1455.3" y="1169.8" width="48.3" height="3.0" rx="1.4" fill="#f2bd22"/>
<g><rect x="1465.2" y="1145.3" width="28.5" height="22.4" rx="3" fill="#fff" stroke="#f0f0f3" stroke-width="1"/></g>
<text x="1479.5" y="1160.6" font-size="12.3" fill="#6e7079" text-anchor="middle" textLength="18.5" lengthAdjust="spacingAndGlyphs">441</text>
<text x="1479.5" y="1248.0" font-size="10" fill="#6e7079" text-anchor="middle" textLength="45.9" lengthAdjust="spacingAndGlyphs">2024-11-13</text>
<rect x="1510.4" y="1172.0" width="48.3" height="56.3" rx="3" fill="#2aa64a"/>
<rect x="1510.4" y="1167.6" width="48.3" height="3.0" rx="1.4" fill="#84c04d"/>
<g><rect x="1520.4" y="1143.1" width="28.4" height="22.4" rx="3" fill="#fff" stroke="#f0f0f3" stroke-width="1"/></g>
<text x="1534.6" y="1158.4" font-size="12.3" fill="#6e7079" text-anchor="middle" textLength="18.4" lengthAdjust="spacingAndGlyphs">461</text>
<rect x="1565.5" y="1192.4" width="48.3" height="35.9" rx="3" fill="#2aa64a"/>
<rect x="1565.5" y="1180.8" width="48.3" height="10.2" rx="3" fill="#84c04d"/>
<g><rect x="1574.7" y="1156.3" width="30.0" height="22.4" rx="3" fill="#fff" stroke="#f0f0f3" stroke-width="1"/></g>
<text x="1589.7" y="1171.6" font-size="12.3" fill="#6e7079" text-anchor="middle" textLength="20.0" lengthAdjust="spacingAndGlyphs">379</text>
<text x="1589.7" y="1248.0" font-size="10" fill="#6e7079" text-anchor="middle" textLength="46.0" lengthAdjust="spacingAndGlyphs">2024-11-15</text>
<rect x="1620.7" y="1179.7" width="48.3" height="48.6" rx="3" fill="#2aa64a"/>
<g><rect x="1629.3" y="1155.4" width="31.0" height="22.4" rx="3" fill="#fff" stroke="#f0f0f3" stroke-width="1"/></g>
<text x="1644.8" y="1170.7" font-size="12.3" fill="#6e7079" text-anchor="middle" textLength="21.0" lengthAdjust="spacingAndGlyphs">386</text>
<rect x="1675.8" y="1114.7" width="48.3" height="113.6" rx="3" fill="#2aa64a"/>
<rect x="1675.8" y="1092.3" width="48.3" height="20.9" rx="3" fill="#84c04d"/>
<g><rect x="1681.8" y="1067.8" width="36.3" height="22.4" rx="3" fill="#fff" stroke="#f0f0f3" stroke-width="1"/></g>
<text x="1699.9" y="1083.1" font-size="12.3" fill="#6e7079" text-anchor="middle" textLength="26.3" lengthAdjust="spacingAndGlyphs">1066</text>
<text x="1699.9" y="1248.0" font-size="10" fill="#6e7079" text-anchor="middle" textLength="46.4" lengthAdjust="spacingAndGlyphs">2024-11-18</text>
<rect x="1730.9" y="1223.3" width="48.3" height="5.0" rx="3" fill="#2aa64a"/>
<g><rect x="1743.4" y="1199.0" width="23.3" height="22.4" rx="3" fill="#fff" stroke="#f0f0f3" stroke-width="1"/></g>
<text x="1755.1" y="1214.3" font-size="12.3" fill="#6e7079" text-anchor="middle" textLength="13.3" lengthAdjust="spacingAndGlyphs">47</text>
<rect x="370.7" y="1452.5" width="16.0" height="16.0" rx="4" fill="#0fa04f"/>
<text x="395.2" y="1466.6" font-size="16" fill="#2f343b" textLength="138.6" lengthAdjust="spacingAndGlyphs">Delivered:84.52%</text>
<rect x="566.8" y="1452.5" width="16.0" height="16.0" rx="4" fill="#6a60d1"/>
<text x="591.2" y="1466.6" font-size="16" fill="#2f343b" textLength="133.2" lengthAdjust="spacingAndGlyphs">In Transit: 10.41%</text>
<rect x="757.0" y="1452.5" width="16.0" height="16.0" rx="4" fill="#3d6ef5"/>
<text x="781.0" y="1466.6" font-size="16" fill="#2f343b" textLength="213.7" lengthAdjust="spacingAndGlyphs">Awaiting Collection: 0.95%</text>
<rect x="1029.6" y="1452.5" width="16.0" height="16.0" rx="4" fill="#ffa000"/>
<text x="1053.3" y="1466.6" font-size="16" fill="#2f343b" textLength="124.1" lengthAdjust="spacingAndGlyphs">Pending: 3.94%</text>
<rect x="1211.0" y="1452.5" width="16.0" height="16.0" rx="4" fill="#e8300a"/>
<text x="1235.8" y="1466.6" font-size="16" fill="#2f343b" textLength="136.1" lengthAdjust="spacingAndGlyphs">Exception: 0.07%</text>
<rect x="1405.1" y="1452.5" width="16.0" height="16.0" rx="4" fill="#a75fc8"/>
<text x="1429.9" y="1466.6" font-size="16" fill="#2f343b" textLength="127.0" lengthAdjust="spacingAndGlyphs">Returned: 0.12%</text>
<clipPath id="c3"><rect x="112" y="1500.6" width="1706" height="130"/></clipPath>
<g><path d="M287.41 1545.48A77 77 0 1 1 215.15 1513.91L219.85 1551.11A39.5 39.5 0 1 0 256.92 1567.31Z" fill="#10a050"/><path d="M216.08 1513.79A77 77 0 0 1 219.43 1513.49L222.04 1550.90A39.5 39.5 0 0 0 220.33 1551.05Z" fill="#ef5466"/><path d="M219.97 1513.45A77 77 0 0 1 220.90 1513.40L222.80 1550.85A39.5 39.5 0 0 0 222.32 1550.88Z" fill="#f3a3e3"/><path d="M221.44 1513.37A77 77 0 0 1 224.13 1513.30L224.46 1550.80A39.5 39.5 0 0 0 223.08 1550.84Z" fill="#8e44ad"/><path d="M225.61 1513.30A77 77 0 0 1 242.38 1515.33L233.82 1551.84A39.5 39.5 0 0 0 225.21 1550.80Z" fill="#ff9408"/><path d="M243.82 1515.69A77 77 0 0 1 283.53 1540.50L254.93 1564.75A39.5 39.5 0 0 0 234.56 1552.02Z" fill="#7470d4"/><path d="M284.30 1541.43A77 77 0 0 1 286.62 1544.39L256.51 1566.75A39.5 39.5 0 0 0 255.32 1565.23Z" fill="#7090f0"/></g>
<text x="224.8" y="1597.7" font-size="18" fill="#3b424c" font-weight="700" text-anchor="middle" textLength="57.0" lengthAdjust="spacingAndGlyphs" stroke="#3b424c" stroke-width="0.4">14,547</text>
<g clip-path="url(#c3)">
<path d="M348.4 1502H1784" stroke="#f5f6f7" stroke-width="1.3"/>
<path d="M345.4 1502H348.4" stroke="#e8eaee" stroke-width="1.2"/>
<text x="338.7" y="1505.6" font-size="10" fill="#6e7079" text-anchor="end" textLength="23.8" lengthAdjust="spacingAndGlyphs">1,400</text>
<path d="M348.4 1528.2H1784" stroke="#f5f6f7" stroke-width="1.3"/>
<path d="M345.4 1528.2H348.4" stroke="#e8eaee" stroke-width="1.2"/>
<text x="338.7" y="1531.8" font-size="10" fill="#6e7079" text-anchor="end" textLength="23.3" lengthAdjust="spacingAndGlyphs">1,200</text>
<path d="M348.4 1554.3H1784" stroke="#f5f6f7" stroke-width="1.3"/>
<path d="M345.4 1554.3H348.4" stroke="#e8eaee" stroke-width="1.2"/>
<text x="338.7" y="1557.9" font-size="10" fill="#6e7079" text-anchor="end" textLength="24.2" lengthAdjust="spacingAndGlyphs">1,000</text>
<path d="M348.4 1580.4H1784" stroke="#f5f6f7" stroke-width="1.3"/>
<path d="M345.4 1580.4H348.4" stroke="#e8eaee" stroke-width="1.2"/>
<text x="338.7" y="1584.0" font-size="10" fill="#6e7079" text-anchor="end" textLength="18.3" lengthAdjust="spacingAndGlyphs">800</text>
<path d="M348.4 1606.5H1784" stroke="#f5f6f7" stroke-width="1.3"/>
<path d="M345.4 1606.5H348.4" stroke="#e8eaee" stroke-width="1.2"/>
<text x="338.7" y="1610.1" font-size="10" fill="#6e7079" text-anchor="end" textLength="18.2" lengthAdjust="spacingAndGlyphs">600</text>
<path d="M348.4 1502V1640" stroke="#e8eaee" stroke-width="1.3"/>
</g>
<rect x="444.2" y="1583.2" width="40.0" height="56.8" rx="3" fill="#10a050"/>
<rect x="444.2" y="1574.8" width="40.0" height="2.2" rx="1.2" fill="#8e44ad"/>
<rect x="444.2" y="1577.3" width="40.0" height="1.3" rx="1.2" fill="#f3a3e3"/>
<rect x="444.2" y="1579.0" width="40.0" height="2.3" rx="1.2" fill="#ef5466"/>
<g><rect x="448.9" y="1550.2" width="30.7" height="22.4" rx="3" fill="#fff" stroke="#f0f0f3" stroke-width="1"/></g>
<text x="464.2" y="1565.5" font-size="12.3" fill="#6e7079" text-anchor="middle" textLength="20.6" lengthAdjust="spacingAndGlyphs">764</text>
<g><rect x="495.5" y="1604.1" width="30.0" height="22.4" rx="3" fill="#fff" stroke="#f0f0f3" stroke-width="1"/></g>
<text x="510.5" y="1619.4" font-size="12.3" fill="#6e7079" text-anchor="middle" textLength="20.0" lengthAdjust="spacingAndGlyphs">376</text>
<g><rect x="541.7" y="1607.4" width="30.0" height="22.4" rx="3" fill="#fff" stroke="#f0f0f3" stroke-width="1"/></g>
<text x="556.8" y="1622.7" font-size="12.3" fill="#6e7079" text-anchor="middle" textLength="20.0" lengthAdjust="spacingAndGlyphs">353</text>
<rect x="583.0" y="1601.6" width="40.0" height="38.4" rx="3" fill="#10a050"/>
<g><rect x="587.5" y="1576.6" width="31.2" height="22.4" rx="3" fill="#fff" stroke="#f0f0f3" stroke-width="1"/></g>
<text x="603.0" y="1591.9" font-size="12.3" fill="#6e7079" text-anchor="middle" textLength="21.1" lengthAdjust="spacingAndGlyphs">568</text>
<g><rect x="634.1" y="1610.9" width="30.4" height="22.4" rx="3" fill="#fff" stroke="#f0f0f3" stroke-width="1"/></g>
<text x="649.3" y="1626.2" font-size="12.3" fill="#6e7079" text-anchor="middle" textLength="20.4" lengthAdjust="spacingAndGlyphs">393</text>
<rect x="768.2" y="1536.6" width="40.0" height="103.4" rx="3" fill="#10a050"/>
<rect x="768.2" y="1532.3" width="40.0" height="2.3" rx="1.2" fill="#8e44ad"/>
<g><rect x="770.7" y="1508.0" width="35.0" height="22.4" rx="3" fill="#fff" stroke="#f0f0f3" stroke-width="1"/></g>
<text x="788.2" y="1523.3" font-size="12.3" fill="#6e7079" text-anchor="middle" textLength="25.0" lengthAdjust="spacingAndGlyphs">1073</text>
<rect x="814.4" y="1559.3" width="40.0" height="80.7" rx="3" fill="#10a050"/>
<rect x="814.4" y="1555.0" width="40.0" height="2.4" rx="1.2" fill="#8e44ad"/>
<g><rect x="818.4" y="1530.6" width="32.1" height="22.4" rx="3" fill="#fff" stroke="#f0f0f3" stroke-width="1"/></g>
<text x="834.4" y="1545.9" font-size="12.3" fill="#6e7079" text-anchor="middle" textLength="22.1" lengthAdjust="spacingAndGlyphs">906</text>
<rect x="860.7" y="1608.4" width="40.0" height="31.6" rx="3" fill="#10a050"/>
<rect x="860.7" y="1600.3" width="40.0" height="2.3" rx="1.2" fill="#8e44ad"/>
<rect x="860.7" y="1604.1" width="40.0" height="2.4" rx="1.2" fill="#ef5466"/>
<g><rect x="865.8" y="1575.6" width="29.8" height="22.4" rx="3" fill="#fff" stroke="#f0f0f3" stroke-width="1"/></g>
<text x="880.7" y="1590.9" font-size="12.3" fill="#6e7079" text-anchor="middle" textLength="19.8" lengthAdjust="spacingAndGlyphs">575</text>
<rect x="907.0" y="1600.2" width="40.0" height="39.8" rx="3" fill="#10a050"/>
<rect x="907.0" y="1596.2" width="40.0" height="2.3" rx="1.2" fill="#8e44ad"/>
<g><rect x="911.0" y="1571.8" width="32.1" height="22.4" rx="3" fill="#fff" stroke="#f0f0f3" stroke-width="1"/></g>
<text x="927.0" y="1587.1" font-size="12.3" fill="#6e7079" text-anchor="middle" textLength="22.1" lengthAdjust="spacingAndGlyphs">606</text>
<g><rect x="957.9" y="1595.8" width="30.8" height="22.4" rx="3" fill="#fff" stroke="#f0f0f3" stroke-width="1"/></g>
<text x="973.3" y="1611.1" font-size="12.3" fill="#6e7079" text-anchor="middle" textLength="20.8" lengthAdjust="spacingAndGlyphs">447</text>
<rect x="1045.8" y="1600.2" width="40.0" height="39.8" rx="3" fill="#10a050"/>
<g><rect x="1050.0" y="1575.2" width="31.7" height="22.4" rx="3" fill="#fff" stroke="#f0f0f3" stroke-width="1"/></g>
<text x="1065.8" y="1590.5" font-size="12.3" fill="#6e7079" text-anchor="middle" textLength="21.7" lengthAdjust="spacingAndGlyphs">605</text>
<rect x="1092.1" y="1548.2" width="40.0" height="91.8" rx="3" fill="#10a050"/>
<rect x="1092.1" y="1540.0" width="40.0" height="2.4" rx="1.2" fill="#8e44ad"/>
<rect x="1092.1" y="1544.3" width="40.0" height="2.2" rx="1.2" fill="#ef5466"/>
<g><rect x="1093.8" y="1515.2" width="36.6" height="22.4" rx="3" fill="#fff" stroke="#f0f0f3" stroke-width="1"/></g>
<text x="1112.1" y="1530.5" font-size="12.3" fill="#6e7079" text-anchor="middle" textLength="26.6" lengthAdjust="spacingAndGlyphs">1005</text>
<rect x="1138.4" y="1588.4" width="40.0" height="51.6" rx="3" fill="#10a050"/>
<g><rect x="1142.9" y="1563.2" width="30.9" height="22.4" rx="3" fill="#fff" stroke="#f0f0f3" stroke-width="1"/></g>
<text x="1158.4" y="1578.5" font-size="12.3" fill="#6e7079" text-anchor="middle" textLength="20.9" lengthAdjust="spacingAndGlyphs">693</text>
<rect x="1184.7" y="1589.4" width="40.0" height="50.6" rx="3" fill="#10a050"/>
<rect x="1184.7" y="1585.1" width="40.0" height="2.3" rx="1.2" fill="#8e44ad"/>
<g><rect x="1188.9" y="1560.6" width="31.6" height="22.4" rx="3" fill="#fff" stroke="#f0f0f3" stroke-width="1"/></g>
<text x="1204.7" y="1575.9" font-size="12.3" fill="#6e7079" text-anchor="middle" textLength="21.6" lengthAdjust="spacingAndGlyphs">688</text>
<rect x="1231.0" y="1615.6" width="40.0" height="24.4" rx="3" fill="#10a050"/>
<rect x="1231.0" y="1611.3" width="40.0" height="2.3" rx="1.2" fill="#ef5466"/>
<g><rect x="1237.3" y="1586.2" width="27.4" height="22.4" rx="3" fill="#fff" stroke="#f0f0f3" stroke-width="1"/></g>
<text x="1251.0" y="1601.5" font-size="12.3" fill="#6e7079" text-anchor="middle" textLength="17.4" lengthAdjust="spacingAndGlyphs">513</text>
<g><rect x="1283.5" y="1610.3" width="27.4" height="22.4" rx="3" fill="#fff" stroke="#f0f0f3" stroke-width="1"/></g>
<text x="1297.2" y="1625.6" font-size="12.3" fill="#6e7079" text-anchor="middle" textLength="17.4" lengthAdjust="spacingAndGlyphs">351</text>
<rect x="1369.8" y="1571.1" width="40.0" height="68.9" rx="3" fill="#10a050"/>
<g><rect x="1374.3" y="1546.2" width="31.0" height="22.4" rx="3" fill="#fff" stroke="#f0f0f3" stroke-width="1"/></g>
<text x="1389.8" y="1561.5" font-size="12.3" fill="#6e7079" text-anchor="middle" textLength="21.0" lengthAdjust="spacingAndGlyphs">863</text>
<rect x="1416.1" y="1604.0" width="40.0" height="36.0" rx="3" fill="#10a050"/>
<rect x="1416.1" y="1596.0" width="40.0" height="2.2" rx="1.2" fill="#8e44ad"/>
<rect x="1416.1" y="1600.0" width="40.0" height="2.2" rx="1.2" fill="#ef5466"/>
<g><rect x="1421.2" y="1571.0" width="29.7" height="22.4" rx="3" fill="#fff" stroke="#f0f0f3" stroke-width="1"/></g>
<text x="1436.1" y="1586.3" font-size="12.3" fill="#6e7079" text-anchor="middle" textLength="19.7" lengthAdjust="spacingAndGlyphs">573</text>
<rect x="1462.4" y="1609.7" width="40.0" height="30.3" rx="3" fill="#10a050"/>
<g><rect x="1467.0" y="1584.9" width="30.7" height="22.4" rx="3" fill="#fff" stroke="#f0f0f3" stroke-width="1"/></g>
<text x="1482.4" y="1600.2" font-size="12.3" fill="#6e7079" text-anchor="middle" textLength="20.6" lengthAdjust="spacingAndGlyphs">538</text>
<rect x="1508.6" y="1616.2" width="40.0" height="2.3" rx="1.2" fill="#ef5466"/>
<g><rect x="1513.5" y="1591.3" width="30.3" height="22.4" rx="3" fill="#fff" stroke="#f0f0f3" stroke-width="1"/></g>
<text x="1528.6" y="1606.6" font-size="12.3" fill="#6e7079" text-anchor="middle" textLength="20.3" lengthAdjust="spacingAndGlyphs">457</text>
<g><rect x="1561.0" y="1614.7" width="27.9" height="22.4" rx="3" fill="#fff" stroke="#f0f0f3" stroke-width="1"/></g>
<text x="1574.9" y="1630.0" font-size="12.3" fill="#6e7079" text-anchor="middle" textLength="17.9" lengthAdjust="spacingAndGlyphs">412</text>
<rect x="1601.2" y="1616.8" width="40.0" height="2.2" rx="1.2" fill="#ef5466"/>
<g><rect x="1605.5" y="1592.0" width="31.3" height="22.4" rx="3" fill="#fff" stroke="#f0f0f3" stroke-width="1"/></g>
<text x="1621.2" y="1607.3" font-size="12.3" fill="#6e7079" text-anchor="middle" textLength="21.3" lengthAdjust="spacingAndGlyphs">470</text>
<rect x="1693.8" y="1606.1" width="40.0" height="33.9" rx="3" fill="#7470d4"/>
<rect x="1693.8" y="1592.5" width="40.0" height="2.3" rx="1.2" fill="#ef5466"/>
<rect x="1693.8" y="1596.6" width="40.0" height="2.2" rx="1.2" fill="#10a050"/>
<rect x="1693.8" y="1600.6" width="40.0" height="3.0" rx="1.2" fill="#7090f0"/>
<g><rect x="1697.7" y="1567.7" width="32.1" height="22.4" rx="3" fill="#fff" stroke="#f0f0f3" stroke-width="1"/></g>
<text x="1713.8" y="1583.0" font-size="12.3" fill="#6e7079" text-anchor="middle" textLength="22.1" lengthAdjust="spacingAndGlyphs">660</text>
<g><rect x="1744.7" y="1603.6" width="30.7" height="22.4" rx="3" fill="#fff" stroke="#f0f0f3" stroke-width="1"/></g>
<text x="1760.0" y="1618.9" font-size="12.3" fill="#6e7079" text-anchor="middle" textLength="20.6" lengthAdjust="spacingAndGlyphs">435</text>
<path d="M1086.6 48.400000000000006Q1088.3149999999998 56.485 1096.3999999999999 58.2Q1088.3149999999998 59.915000000000006 1086.6 68.0Q1084.885 59.915000000000006 1076.8 58.2Q1084.885 56.485 1086.6 48.400000000000006ZM1073.8 43.4Q1074.885 48.515 1080.0 49.6Q1074.885 50.685 1073.8 55.800000000000004Q1072.715 50.685 1067.6 49.6Q1072.715 48.515 1073.8 43.4ZM1074.2 60.800000000000004Q1074.97 64.43 1078.6000000000001 65.2Q1074.97 65.97 1074.2 69.60000000000001Q1073.43 65.97 1069.8 65.2Q1073.43 64.43 1074.2 60.800000000000004Z" fill="#6a1bff"/>
<g fill="none" stroke="#ffffff" stroke-width="2.5" stroke-linecap="round" stroke-linejoin="round"><path d="M2027.4 54.4V47.4Q2027.4 45.2 2029.6 45.2H2046.4Q2048.6 45.2 2048.6 47.4V64.2Q2048.6 66.4 2046.4 66.4H2044"/><path d="M2025.4 66.8L2031 59.2L2036.2 65.6L2042 58.4"/></g><path d="M2027.2 45H2048.8V49.2H2027.2Z" fill="#ffffff"/><circle cx="2042.1" cy="58.4" r="2.45" fill="#ffffff"/><circle cx="2031" cy="59.1" r="1.75" fill="#ffffff"/><circle cx="2036.2" cy="65.6" r="1.75" fill="#ffffff"/>
<rect x="2107.2" y="42.7" width="21.6" height="26.6" rx="3" fill="#ffffff"/><rect x="2110.2" y="45.5" width="15.6" height="4.6" rx="0.9" fill="#6a1bff"/><circle cx="2112.6" cy="54.8" r="1.35" fill="#6a1bff"/><circle cx="2118.0" cy="54.8" r="1.35" fill="#6a1bff"/><circle cx="2123.4" cy="54.8" r="1.35" fill="#6a1bff"/><circle cx="2112.6" cy="59.8" r="1.35" fill="#6a1bff"/><circle cx="2118.0" cy="59.8" r="1.35" fill="#6a1bff"/><circle cx="2123.4" cy="59.8" r="1.35" fill="#6a1bff"/><circle cx="2112.6" cy="65.5" r="1.35" fill="#6a1bff"/><rect x="2116.9" y="64.1" width="7.8" height="2.8" rx="1.4" fill="#6a1bff"/>
<path d="M2188.7 44.3H2207.4Q2210 44.3 2210 46.9V65.5Q2210 68.1 2207.4 68.1H2188.7Q2186.1 68.1 2186.1 65.5V46.9Q2186.1 44.3 2188.7 44.3ZM2189 51V64.9H2207.1V51Z" fill="#ffffff" fill-rule="evenodd"/><rect x="2190.1" y="41" width="2.7" height="6" rx="1.2" fill="#ffffff"/><rect x="2203.4" y="41" width="2.7" height="6" rx="1.2" fill="#ffffff"/><path d="M2199.1 57.4L2203.9 62.2M2203.9 57.4L2199.1 62.2" stroke="#ffffff" stroke-width="2.5" stroke-linecap="round"/>
<path d="M2278 42.6C2279.2 42.6 2280 43.5 2280 44.6V45.2C2283.8 46.2 2286.2 49.5 2286.2 53.6V59.6L2288.7 62.9C2289.3 63.8 2288.8 65.2 2287.6 65.2H2268.4C2267.2 65.2 2266.7 63.8 2267.3 62.9L2269.8 59.6V53.6C2269.8 49.5 2272.2 46.2 2276 45.2V44.6C2276 43.5 2276.8 42.6 2278 42.6Z" fill="#ffffff"/><path d="M2274.8 66.6H2281.2C2281.2 68.3 2279.8 69.4 2278 69.4C2276.2 69.4 2274.8 68.3 2274.8 66.6Z" fill="#ffffff"/>
<circle cx="2358.1" cy="56.1" r="13.3" fill="#ffffff"/><path d="M2353.9 52.6C2353.9 50 2355.8 48.6 2358.2 48.6C2360.6 48.6 2362.4 50 2362.4 52.2C2362.4 54.9 2358.3 55.3 2358.3 58.4" fill="none" stroke="#6a1bff" stroke-width="2.35" stroke-linecap="round"/><circle cx="2358.3" cy="62.8" r="1.65" fill="#6a1bff"/>
<clipPath id="av"><circle cx="2792" cy="55.9" r="40"/></clipPath><circle cx="2792" cy="55.9" r="40.2" fill="#f0f1f3"/><g clip-path="url(#av)"><ellipse cx="2772.2" cy="61.6" rx="2.4" ry="4.8" fill="#e9c9b4"/><ellipse cx="2810.8" cy="62.4" rx="2.4" ry="4.8" fill="#e9c9b4"/><path d="M2773.4 48C2773 58 2774 68 2778.6 75.6C2782 81 2787 83.8 2791.4 83.8C2796 83.8 2801.4 80.4 2805 75C2809.4 68 2810.6 58 2810 48C2806 38 2778 38 2773.4 48Z" fill="#f1dccb"/><path d="M2778.6 75.6C2782 81 2787 83.8 2791.4 83.8C2796 83.8 2801.4 80.4 2805 75C2800 79.4 2796 80.8 2791.4 80.8C2787 80.8 2783 79.6 2778.6 75.6Z" fill="#e6c8b2"/><path d="M2771.9 58.4C2770.4 50 2771 42 2773.2 36.5C2775 31.6 2779 28.4 2784 26.9C2787 26.2 2790 26 2791.4 25.6C2792.4 25 2793.4 24.2 2794.4 23.9C2796.2 23.9 2798.2 25.2 2800.2 26.4C2802.6 27.8 2806 28.4 2809.8 29.2C2809 30.2 2808.8 31.2 2809.4 32.2C2812.2 35.6 2813.4 40.4 2813.4 46C2813.4 50 2813 54.6 2812.4 58.4C2811.2 55 2810.2 52.4 2808.8 50C2807.8 47.4 2806.4 45.4 2804 44C2799.6 42.6 2795 42.2 2790 42.4C2785.6 42.6 2781.6 43.4 2778.6 45C2776.4 46.6 2775.2 49.4 2774.4 52C2773.4 54 2772.6 56 2771.9 58.4Z" fill="#2c2927"/><path d="M2777.8 51.8Q2782 49.6 2787 51.2" fill="none" stroke="#4a342b" stroke-width="1.2" stroke-linecap="round"/><path d="M2797 51.6Q2801.4 50.6 2805 53.6" fill="none" stroke="#4a342b" stroke-width="1.2" stroke-linecap="round"/><ellipse cx="2782" cy="59" rx="4" ry="3" fill="#fbf6f2"/><ellipse cx="2799.4" cy="60" rx="4" ry="3" fill="#fbf6f2"/><circle cx="2782.2" cy="59.1" r="2.7" fill="#2a1c16"/><circle cx="2799.2" cy="60.1" r="2.7" fill="#2a1c16"/><circle cx="2781.4" cy="58.2" r="0.8" fill="#fff"/><circle cx="2798.4" cy="59.2" r="0.8" fill="#fff"/><ellipse cx="2790.4" cy="66.4" rx="3.1" ry="2.7" fill="#f4e2d4"/><path d="M2787.6 67.6Q2790.4 70.4 2793.4 67.6" fill="none" stroke="#dfbda6" stroke-width="1"/><path d="M2782.2 71.8Q2790.6 73.8 2799.2 72.2Q2797.4 77.6 2790.8 77.8Q2784 77.6 2782.2 71.8Z" fill="#5a2a26"/><path d="M2783.4 72.2Q2790.6 74 2798 72.5L2797.4 74Q2790.6 75.4 2784 73.8Z" fill="#cfc8c6"/><path d="M2785.4 76.4Q2790.6 74.8 2796 76.4Q2793.6 77.8 2790.8 77.8Q2787.8 77.8 2785.4 76.4Z" fill="#c9777a"/></g>
<g stroke="#cbced3" stroke-width="5.4" stroke-linecap="round"><path d="M35.5 149.3H60.5M40 160H56M44.9 170.7H51.1"/></g>
<path d="M48 240.4C48.8 240.4 49.6 240.7 50.2 241.3L64.4 254.2C65.2 255 65.3 256.2 64.6 257C63.9 257.8 62.7 257.9 61.9 257.2L60.6 256V267.4C60.6 269.3 59.1 270.8 57.2 270.8H52.6V262.2C52.6 259.6 50.6 257.6 48 257.6C45.4 257.6 43.4 259.6 43.4 262.2V270.8H38.8C36.9 270.8 35.4 269.3 35.4 267.4V256L34.1 257.2C33.3 257.9 32.1 257.8 31.4 257C30.7 256.2 30.8 255 31.6 254.2L45.8 241.3C46.4 240.7 47.2 240.4 48 240.4Z" fill="#6a1bff"/>
<path d="M47.9 338.2L60.1 347.0L47.9 355.9L35.7 347.0Z" fill="#cbced3" stroke="#cbced3" stroke-width="2.4" stroke-linejoin="round"/>
<path d="M36.3 356.4L47.9 364.9L59.5 356.4" fill="none" stroke="#cbced3" stroke-width="2.6999999999999997" stroke-linecap="round" stroke-linejoin="round"/>
<path d="M46.4 434.4L57.4 442.4L46.4 450.3L35.4 442.4Z" fill="none" stroke="#cbced3" stroke-width="2.7" stroke-linejoin="round"/>
<circle cx="46.4" cy="442.4" r="2.7" fill="#cbced3"/>
<path d="M35.9 450.8L46.4 458.5L56.9 450.8" fill="none" stroke="#cbced3" stroke-width="3.0" stroke-linecap="round" stroke-linejoin="round"/>
<path d="M48.1 531.6L59.1 539.6L48.1 547.5L37.1 539.6Z" fill="none" stroke="#cbced3" stroke-width="2.7" stroke-linejoin="round"/>
<path d="M37.6 548.0L48.1 555.7L58.6 548.0" fill="none" stroke="#cbced3" stroke-width="3.0" stroke-linecap="round" stroke-linejoin="round"/>
<rect x="34.6" y="626.2" width="26.8" height="30.6" rx="5.4" fill="#cbced3"/><rect x="42.4" y="623" width="11.2" height="5" rx="2.5" fill="#cbced3" stroke="#fafafb" stroke-width="1.6"/><g stroke="#fafafb" stroke-width="2.3" stroke-linecap="round"><path d="M46 636.6H54.6M46 643H54.6M46 649.4H51.6"/></g><g fill="#fafafb"><circle cx="41.4" cy="636.6" r="1.5"/><circle cx="41.4" cy="643" r="1.5"/><circle cx="41.4" cy="649.4" r="1.5"/></g>
<rect x="33" y="721" width="30" height="9.4" rx="3" fill="#cbced3"/><path d="M34.6 732.4H61.4V746.4Q61.4 750.8 57 750.8H39Q34.6 750.8 34.6 746.4Z" fill="#cbced3"/><rect x="43.6" y="736.2" width="8.8" height="3" rx="1.5" fill="#fafafb"/>
<path d="M33.6 821H45.6Q49 821 49 824.4V837.6H30.2V824.4Q30.2 821 33.6 821Z" fill="#cbced3"/><path d="M51.2 825.6H58.2Q59.8 825.6 60.8 826.8L64.8 831.6Q65.6 832.6 65.6 833.8V837.6H51.2Z" fill="#cbced3"/><circle cx="37.4" cy="839.4" r="3.2" fill="#cbced3"/><circle cx="58" cy="839.4" r="3.2" fill="#cbced3"/>
<rect x="40.4" y="911" width="15.4" height="15.4" rx="3.2" fill="#cbced3"/><rect x="45.8" y="910.5" width="4.6" height="5.5" rx="1" fill="#fafafb"/><rect x="31.4" y="929.2" width="15.4" height="15.4" rx="3.2" fill="#cbced3"/><rect x="36.8" y="928.7" width="4.6" height="5.5" rx="1" fill="#fafafb"/><rect x="49.4" y="929.2" width="15.4" height="15.4" rx="3.2" fill="#cbced3"/><rect x="54.8" y="928.7" width="4.6" height="5.5" rx="1" fill="#fafafb"/>
<g fill="none" stroke="#cbced3" stroke-width="3.4" stroke-linecap="round" stroke-linejoin="round"><path d="M35.6 1023V1015.6Q35.6 1012 39.2 1012H55.8Q59.4 1012 59.4 1015.6V1031.8Q59.4 1035.4 55.8 1035.4H54"/><path d="M34.6 1035.4L40.8 1027.2L45.2 1031.8L52.2 1024.4"/></g><path d="M35.6 1012H59.4V1017H35.6Z" fill="#cbced3"/><circle cx="52.4" cy="1024.4" r="3.2" fill="#cbced3"/><circle cx="45.2" cy="1031.6" r="2.4" fill="#cbced3"/>
<path d="M36 1106H60Q63 1106 63 1109V1112.6A3.4 3.4 0 0 0 63 1119.4V1123Q63 1126 60 1126H36Q33 1126 33 1123V1119.4A3.4 3.4 0 0 0 33 1112.6V1109Q33 1106 36 1106Z" fill="#cbced3"/><path d="M38 1129.4H61V1130.6Q61 1134.6 57 1134.4Z" fill="#cbced3"/><path d="M43.6 1120L49 1114.8" stroke="#fafafb" stroke-width="2.2" stroke-linecap="round"/><path d="M53.6 1111.2A3.4 3.4 0 1 0 52.8 1116.6A3.4 3.4 0 0 0 54.6 1112.6L52.2 1114.6L50.6 1113L52.6 1110.8Z" fill="#fafafb"/><circle cx="43.6" cy="1120" r="1.2" fill="#cbced3"/>
<rect x="34.6" y="1202.4" width="26.8" height="21.6" rx="4.6" fill="#cbced3"/><rect x="46.7" y="1199.5" width="2.6" height="4" rx="1.3" fill="#cbced3"/><path d="M40.4 1217L45.2 1212.2L48.6 1215.2L55.6 1208.6" fill="none" stroke="#fafafb" stroke-width="2.6" stroke-linecap="round" stroke-linejoin="round"/><path d="M42 1227.6L40 1231.6M54 1227.6L56 1231.6" stroke="#cbced3" stroke-width="2.6" stroke-linecap="round"/>
<rect x="33" y="1297" width="30" height="13.4" rx="6.7" fill="#cbced3"/><rect x="33" y="1314" width="30" height="13.4" rx="6.7" fill="#cbced3"/><circle cx="56.2" cy="1303.7" r="3.5" fill="#fafafb"/><circle cx="39.8" cy="1320.7" r="3.5" fill="#fafafb"/>
<g transform="translate(138.0 152.0)"><path d="M15.50 10.50L20.50 10.50L19.76 12.46L22.09 13.81L23.42 12.18L25.92 16.52L23.85 16.85L23.85 19.55L25.92 19.88L23.42 24.22L22.09 22.59L19.76 23.94L20.50 25.90L15.50 25.90L16.24 23.94L13.91 22.59L12.58 24.22L10.08 19.88L12.15 19.55L12.15 16.85L10.08 16.52L12.58 12.18L13.91 13.81L16.24 12.46Z" fill="#6a1bff" stroke="#6a1bff" stroke-width="0.9" stroke-linejoin="round"/><circle cx="18" cy="18.2" r="2.7" fill="#efe6ff"/></g>
<g transform="translate(138.0 420.0)"><path d="M12.6 10.2H23.1Q23.8 10.2 24.1 10.8L25.3 13.2V19.4A5.4 5.4 0 0 0 18.4 25.6H12Q10.4 25.6 10.4 24V13.2L11.6 10.8Q11.9 10.2 12.6 10.2Z" fill="#6a1bff"/><path d="M13.5 12.2H22.6L23.3 13.8H12.8Z" fill="#efe6ff"/><rect x="15.6" y="15.7" width="4.6" height="1.5" rx="0.75" fill="#efe6ff"/><circle cx="23.8" cy="23.8" r="4.15" fill="#6a1bff"/><path d="M21.7 23.7L23.3 25.2L25.9 22.6" fill="none" stroke="#efe6ff" stroke-width="1.45" stroke-linecap="round" stroke-linejoin="round"/></g>
<g transform="translate(138.0 868.0)"><path d="M8.6 12H20Q20.9 12 20.9 12.9V14H24.2Q24.8 14 25.1 14.5L26.8 17.7Q27 18.1 27 18.6V22.6H9V19H12.4V17.1H9.6Q8.9 17.1 8.9 16.4Q8.9 15.7 9.6 15.7H14V13.7H8.6Q7.9 13.7 7.9 12.85Q7.9 12 8.6 12Z" fill="#6a1bff"/><path d="M21.3 14.7H23.9L25.6 18.6H21.3Z" fill="#efe6ff"/><circle cx="13.05" cy="23" r="3.2" fill="#efe6ff"/><circle cx="23" cy="23" r="3.2" fill="#efe6ff"/><circle cx="13.05" cy="23" r="2.55" fill="#6a1bff"/><circle cx="23" cy="23" r="2.55" fill="#6a1bff"/><circle cx="13.05" cy="23" r="1.1" fill="#efe6ff"/><circle cx="23" cy="23" r="1.1" fill="#efe6ff"/></g>
<g transform="translate(138.0 1326.0)"><path d="M18 8.9C20.8 8.9 23 11.1 23 13.9C23 17.2 18.6 21.4 18 21.9C17.4 21.4 13 17.2 13 13.9C13 11.1 15.2 8.9 18 8.9Z" fill="#6a1bff"/><circle cx="18" cy="13.9" r="2.1" fill="#efe6ff"/><path d="M14.9 20.9H13.5L11.3 25.3H24.7L22.5 20.9H21.1" fill="none" stroke="#6a1bff" stroke-width="1.9" stroke-linecap="round" stroke-linejoin="round"/></g>
<g transform="translate(1854.0 152.0)"><path d="M12.9 12.9A7.2 7.2 0 1 1 10.8 18.5" fill="none" stroke="#6a1bff" stroke-width="1.9" stroke-linecap="round"/><path d="M9.9 10.9V15.1H14.2Z" fill="#6a1bff" stroke="#6a1bff" stroke-width="0.6" stroke-linejoin="round"/></g>
<g transform="translate(2379.0 152.0)"><path d="M12 10.7H15.9A2.1 2.1 0 0 1 20.1 10.7H24Q25.5 10.7 25.5 12.2V24.1Q25.5 25.6 24 25.6H12Q10.4 25.6 10.4 24.1V12.2Q10.4 10.7 12 10.7Z" fill="#6a1bff"/><circle cx="18" cy="11.3" r="0.95" fill="#efe6ff"/><path d="M14.3 17.9L17.1 20.7L21.8 16" fill="none" stroke="#efe6ff" stroke-width="1.7" stroke-linecap="round" stroke-linejoin="round"/></g>
<g transform="translate(1854.0 436.0)"><path d="M12 10.7H15.9A2.1 2.1 0 0 1 20.1 10.7H24Q25.5 10.7 25.5 12.2V24.1Q25.5 25.6 24 25.6H12Q10.4 25.6 10.4 24.1V12.2Q10.4 10.7 12 10.7Z" fill="#6a1bff"/><circle cx="18" cy="11.3" r="0.95" fill="#efe6ff"/><rect x="14" y="14.2" width="8" height="1.4" fill="#efe6ff"/><rect x="14" y="17.3" width="6.1" height="1.5" fill="#efe6ff"/><rect x="14" y="20.5" width="8" height="1.5" fill="#efe6ff"/></g>
<g transform="translate(1854.0 720.0)"><path d="M17.9 8.8L25.9 11.8V17.2C25.9 21.9 22.4 25.9 17.9 27.4C13.4 25.9 9.9 21.9 9.9 17.2V11.8Z" fill="#6a1bff" stroke="#6a1bff" stroke-width="0.5" stroke-linejoin="round"/><path d="M13.9 17.9L16.9 20.9L22.3 15.5" fill="none" stroke="#efe6ff" stroke-width="1.9" stroke-linecap="round" stroke-linejoin="round"/></g>
<g transform="translate(1862.0 1142.0)"><path d="M18.1 9.4C18.8 9.4 19.3 9.9 19.3 10.6V11C21.7 11.6 23.1 13.7 23.1 16.1V19.9L24.6 21.9C25 22.4 24.6 23.1 24 23.1H12.2C11.6 23.1 11.2 22.4 11.6 21.9L13.1 19.9V16.1C13.1 13.7 14.5 11.6 16.9 11V10.6C16.9 9.9 17.4 9.4 18.1 9.4Z" fill="#6a1bff"/><path d="M16.3 24.3H19.9C19.9 25.4 19.1 26.1 18.1 26.1C17.1 26.1 16.3 25.4 16.3 24.3Z" fill="#6a1bff"/></g>
<path d="M1883 1295.2V1283.9H1898V1291.8" fill="none" stroke="#078c5a" stroke-width="1.9"/><g fill="#078c5a"><rect x="1886.2" y="1287.1" width="1.8" height="1.7"/><rect x="1886.2" y="1290.8" width="1.8" height="1.7"/><rect x="1890.2" y="1287.1" width="4.6" height="1.7" rx="0.6"/><rect x="1890.2" y="1290.8" width="4.6" height="1.7" rx="0.6"/><path d="M1879.9 1295.1H1890.9V1300.9H1883Q1879.9 1300.9 1879.9 1297.8Z"/></g><circle cx="1897.1" cy="1299.1" r="6.1" fill="#fff"/><circle cx="1897.1" cy="1299.1" r="4.9" fill="#078c5a"/><path d="M1894.7 1299.2L1896.4 1300.9L1899.5 1297.6" fill="none" stroke="#fff" stroke-width="1.5" stroke-linecap="round" stroke-linejoin="round"/>
<rect x="1885.2" y="1381.1000000000001" width="9.6" height="9.6" rx="1.8" fill="#4a5560"/><rect x="1887.7" y="1380.6000000000001" width="4.6" height="3.5" rx="1" fill="#fff"/><rect x="1879.3000000000002" y="1393.1000000000001" width="9.6" height="9.6" rx="1.8" fill="#4a5560"/><rect x="1881.8" y="1392.6000000000001" width="4.6" height="3.5" rx="1" fill="#fff"/><rect x="1891.1" y="1393.1000000000001" width="9.6" height="9.6" rx="1.8" fill="#4a5560"/><rect x="1893.6" y="1392.6000000000001" width="4.6" height="3.5" rx="1" fill="#fff"/>
<rect x="1885.2" y="1481.1000000000001" width="9.6" height="9.6" rx="1.8" fill="#4a5560"/><rect x="1887.7" y="1480.6000000000001" width="4.6" height="3.5" rx="1" fill="#fff"/><rect x="1879.3000000000002" y="1493.1000000000001" width="9.6" height="9.6" rx="1.8" fill="#4a5560"/><rect x="1881.8" y="1492.6000000000001" width="4.6" height="3.5" rx="1" fill="#fff"/><rect x="1891.1" y="1493.1000000000001" width="9.6" height="9.6" rx="1.8" fill="#4a5560"/><rect x="1893.6" y="1492.6000000000001" width="4.6" height="3.5" rx="1" fill="#fff"/>
<g transform="translate(1880 1582.9)"><path d="M1.6 0H18.4Q20 0 20 1.6V4.9A2.1 2.1 0 0 0 20 9.1V12.4Q20 14 18.4 14H1.6Q0 14 0 12.4V9.1A2.1 2.1 0 0 0 0 4.9V1.6Q0 0 1.6 0Z" fill="#4a5560"/><path d="M3.2 16.6L18.9 16.2L17.4 18.8Q16.9 19.2 16.2 19Z" fill="#4a5560"/><path d="M7 9.8L11.2 6.3" stroke="#fff" stroke-width="1.7" stroke-linecap="round"/><circle cx="11.9" cy="5.6" r="2" fill="#fff"/><path d="M12.2 5.3L14 3.5" stroke="#4a5560" stroke-width="1.3"/></g>
</svg>
</body></html>
